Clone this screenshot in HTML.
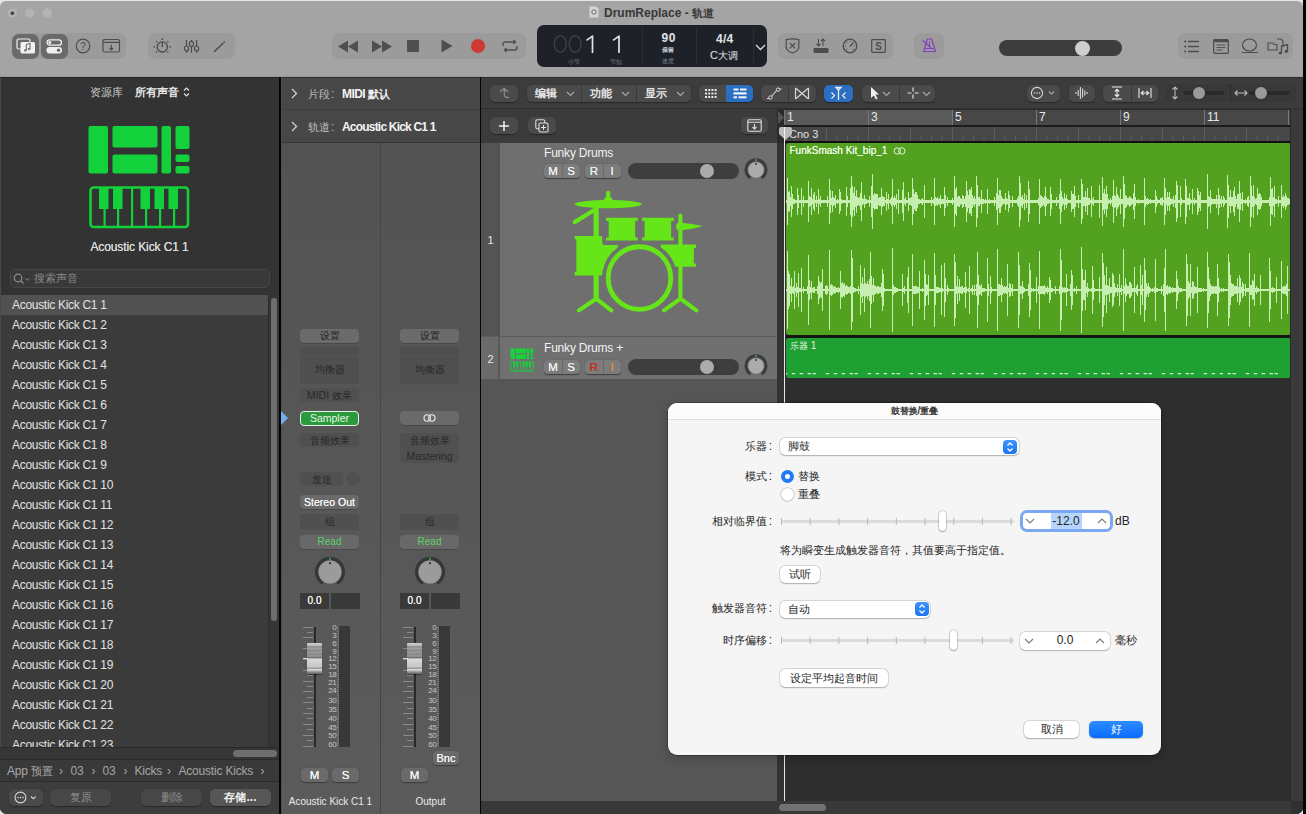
<!DOCTYPE html><html><head><meta charset="utf-8"><style>
*{margin:0;padding:0;box-sizing:border-box}
html,body{width:1306px;height:814px;overflow:hidden;background:#0a0a0a;font-family:"Liberation Sans",sans-serif}
.a{position:absolute}
.t{position:absolute;white-space:nowrap;line-height:1}
svg{position:absolute;overflow:visible}
.c{font-size:0.92em;letter-spacing:var(--cls,0em)}
</style></head><body><div class="a" style="left:0;top:0;width:1306px;height:814px;background:#e6e6e6"></div><div class="a" style="left:1303px;top:0;width:3px;height:814px;background:#060606"></div><div class="a" style="left:0;top:1px;width:1303px;height:813px;border-radius:6px 6px 7px 7px;overflow:hidden;background:#a4a4a4"><svg style="left:0;top:-1px" width="60" height="26" viewBox="0 0 60 26"><g fill="#b4b4b4" stroke="#a2a2a2" stroke-width="0.5"><circle cx="12.4" cy="13.1" r="4.9"/><circle cx="29.6" cy="13.1" r="4.9"/><circle cx="47.3" cy="13.1" r="4.9"/></g><circle cx="12.4" cy="13.2" r="1.9" fill="#4a4a4a"/></svg><svg style="left:589px;top:5px" width="10" height="12" viewBox="0 0 10 12"><path d="M0.5 0.5H7L9.5 3V11.5H0.5Z" fill="#d6d6d6" stroke="#bcbcbc" stroke-width="0.6"/><circle cx="5" cy="6" r="2.2" fill="none" stroke="#6a6a6a" stroke-width="1"/></svg><div class="t" style="left:604px;top:5.5px;font-size:12px;font-weight:bold;color:#383838">DrumReplace - <span class="c">轨道</span></div><div class="a" style="left:12px;top:32px;width:114px;height:26px;border-radius:7px;background:#9b9b9b"></div><div class="a" style="left:148px;top:32px;width:87px;height:26px;border-radius:7px;background:#9b9b9b"></div><div class="a" style="left:332px;top:32px;width:194px;height:26px;border-radius:7px;background:#9b9b9b"></div><div class="a" style="left:778px;top:32px;width:115px;height:26px;border-radius:7px;background:#9b9b9b"></div><div class="a" style="left:914px;top:32px;width:30px;height:26px;border-radius:7px;background:#9b9b9b"></div><div class="a" style="left:1178px;top:32px;width:115px;height:26px;border-radius:7px;background:#9b9b9b"></div><div class="a" style="left:12px;top:33px;width:27px;height:25px;border-radius:7px;background:#6a6a6a"></div><div class="a" style="left:41px;top:33px;width:27px;height:25px;border-radius:7px;background:#6a6a6a"></div><svg style="left:16px;top:37px" width="20" height="17" viewBox="0 0 20 17"><rect x="1" y="1" width="13" height="10" rx="1.5" fill="none" stroke="#f0f0f0" stroke-width="1.2"/><rect x="4.5" y="4" width="14.5" height="11.5" rx="1.5" fill="#f0f0f0"/><path d="M10.3 12.3V6.6L14 5.3V11" fill="none" stroke="#6a6a6a" stroke-width="1.1"/><ellipse cx="9.3" cy="12.4" rx="1.3" ry="1.1" fill="#6a6a6a"/><ellipse cx="13" cy="11.1" rx="1.3" ry="1.1" fill="#6a6a6a"/></svg><svg style="left:46px;top:38px" width="17" height="15" viewBox="0 0 17 15"><rect x="1" y="0.8" width="14.5" height="5.4" rx="2.7" fill="none" stroke="#f0f0f0" stroke-width="1.3"/><circle cx="3.8" cy="3.5" r="1.5" fill="#f0f0f0"/><rect x="0.5" y="8" width="15.5" height="6.5" rx="3.2" fill="#f0f0f0"/><circle cx="12.6" cy="11.2" r="1.7" fill="#6a6a6a"/></svg><svg style="left:75px;top:37px" width="16" height="16" viewBox="0 0 16 16"><circle cx="8" cy="8" r="6.8" fill="none" stroke="#4c4c4c" stroke-width="1.2"/><text x="8" y="11.6" text-anchor="middle" font-size="10" font-family="Liberation Sans" fill="#4c4c4c">?</text></svg><svg style="left:102px;top:37px" width="19" height="16" viewBox="0 0 19 16"><rect x="1" y="1.5" width="16.5" height="12.5" rx="1.5" fill="none" stroke="#4c4c4c" stroke-width="1.2"/><path d="M1 4.3H17.5" stroke="#4c4c4c" stroke-width="1.2"/><path d="M9.3 6.8v5 M7.3 9.8l2 2 2-2" fill="none" stroke="#4c4c4c" stroke-width="1.2"/></svg><svg style="left:153px;top:36px" width="18" height="18" viewBox="0 0 18 18"><circle cx="9.3" cy="9.9" r="5.1" fill="none" stroke="#4c4c4c" stroke-width="1.3"/><path d="M9.3 9.9V5" stroke="#4c4c4c" stroke-width="1.3"/><g fill="#4c4c4c"><circle cx="9.3" cy="2.2" r="0.85"/><circle cx="3.6" cy="4.5" r="0.8"/><circle cx="14.8" cy="4.5" r="0.8"/><circle cx="1.3" cy="9.9" r="0.8"/><circle cx="17" cy="9.9" r="0.8"/><circle cx="3.6" cy="15.1" r="0.8"/><circle cx="14.8" cy="15.1" r="0.8"/></g></svg><svg style="left:183px;top:38px" width="17" height="15" viewBox="0 0 17 15"><g stroke="#4c4c4c" stroke-width="1.2" fill="none"><path d="M3.5 1.1V13.7 M8.5 1.1V13.7 M13.6 1.1V13.7"/><rect x="1.5" y="7" width="4" height="5" rx="2" fill="#9b9b9b"/><rect x="6.5" y="2.4" width="4" height="5" rx="2" fill="#9b9b9b"/><rect x="11.6" y="7" width="4" height="5" rx="2" fill="#9b9b9b"/></g></svg><svg style="left:213px;top:39px" width="13" height="13" viewBox="0 0 13 13"><path d="M1.4 11.5L10 3.2" stroke="#4c4c4c" stroke-width="1.5" stroke-linecap="round"/><circle cx="11.2" cy="1.9" r="0.8" fill="#4c4c4c"/></svg><svg style="left:338px;top:39px" width="21" height="13" viewBox="0 0 21 13"><path d="M10 0.5L0 6.5 10 12.5Z M20 0.5L10 6.5 20 12.5Z" fill="#4f4f4f"/></svg><svg style="left:372px;top:39px" width="21" height="13" viewBox="0 0 21 13"><path d="M0 0.5L10 6.5 0 12.5Z M10 0.5L20 6.5 10 12.5Z" fill="#4f4f4f"/></svg><div class="a" style="left:407px;top:39px;width:12px;height:12px;border-radius:1px;background:#4f4f4f"></div><svg style="left:441px;top:38px" width="12" height="14" viewBox="0 0 12 14"><path d="M0.5 0.5L11.5 7 0.5 13.5Z" fill="#4f4f4f"/></svg><div class="a" style="left:471px;top:38px;width:14px;height:14px;border-radius:50%;background:#cc3a33"></div><svg style="left:501px;top:38px" width="18" height="14" viewBox="0 0 18 14"><g fill="none" stroke="#4f4f4f" stroke-width="1.4"><path d="M2 7V5.5Q2 3 4.5 3H14.5 M12.5 1l2 2-2 2 M16 7V8.5Q16 11 13.5 11H3.5 M5.5 9l-2 2 2 2"/></g></svg><div class="a" style="left:537px;top:24px;width:230px;height:42px;border-radius:7px;background:#1f2129"></div><div class="a" style="left:642px;top:26px;width:1px;height:38px;background:#2b2e37"></div><div class="a" style="left:696px;top:26px;width:1px;height:38px;background:#2b2e37"></div><div class="a" style="left:753px;top:26px;width:1px;height:38px;background:#2b2e37"></div><svg style="left:540px;top:29px" width="90" height="28" viewBox="0 0 90 28"><g fill="none" stroke-width="1.5"><ellipse cx="20.3" cy="14" rx="5.9" ry="8.3" stroke="#3b3e48"/><ellipse cx="35.2" cy="14" rx="5.9" ry="8.3" stroke="#3b3e48"/><path d="M46.5 10.4L52.5 6.1V22.9 M73 10.4L79 6.1V22.9" stroke="#dde5ee" stroke-width="1.7" stroke-linejoin="round"/></g></svg><div class="t" style="left:568px;top:57px;font-size:7px;color:#6f7d8c"><span class="c">小节</span></div><div class="t" style="left:610px;top:57px;font-size:7px;color:#6f7d8c"><span class="c">节拍</span></div><div class="t" style="left:661.5px;top:30.5px;font-size:12px;letter-spacing:0.6px;font-weight:bold;color:#e0e4ea">90</div><div class="t" style="left:662px;top:45px;font-size:7px;font-weight:bold;color:#d0d4da"><span class="c">保留</span></div><div class="t" style="left:662px;top:56px;font-size:7px;color:#7b8898"><span class="c">速度</span></div><div class="t" style="left:716px;top:31.5px;font-size:12px;letter-spacing:0.3px;font-weight:bold;color:#e0e4ea">4/4</div><div class="t" style="left:710px;top:48.5px;font-size:11px;color:#e0e4ea">C<span class="c">大调</span></div><svg style="left:755px;top:43px" width="11" height="7" viewBox="0 0 11 7"><path d="M1 1l4.5 4.5L10 1" fill="none" stroke="#d8d8d8" stroke-width="1.4"/></svg><svg style="left:785px;top:37px" width="15" height="16" viewBox="0 0 15 16"><path d="M1.2 1.5Q7.5 0.2 13.8 1.5V9Q13.8 13 7.5 15Q1.2 13 1.2 9Z" fill="none" stroke="#4c4c4c" stroke-width="1.2"/><path d="M4.8 5l5.4 5.4 M10.2 5l-5.4 5.4" stroke="#4c4c4c" stroke-width="1.1"/></svg><svg style="left:813px;top:37px" width="16" height="16" viewBox="0 0 16 16"><path d="M5.5 1v7 M3.5 6l2 2 2-2 M10 8V1 M8 3l2-2 2 2" fill="none" stroke="#4c4c4c" stroke-width="1.1"/><rect x="0.5" y="10" width="15" height="5" rx="1.2" fill="#4c4c4c"/></svg><svg style="left:842px;top:37px" width="16" height="16" viewBox="0 0 16 16"><circle cx="8" cy="8" r="6.8" fill="none" stroke="#4c4c4c" stroke-width="1.3"/><path d="M8 8.5l3.5-4" stroke="#4c4c4c" stroke-width="1.4"/><g fill="#4c4c4c"><circle cx="8" cy="3.3" r="0.6"/><circle cx="4.6" cy="4.6" r="0.6"/><circle cx="3.3" cy="8" r="0.6"/><circle cx="4.6" cy="11.4" r="0.6"/><circle cx="11.4" cy="11.4" r="0.6"/><circle cx="12.7" cy="8" r="0.6"/></g></svg><svg style="left:871px;top:38px" width="15" height="14" viewBox="0 0 15 14"><rect x="0.7" y="0.7" width="13.6" height="12.6" rx="0.8" fill="none" stroke="#4c4c4c" stroke-width="1.2"/><text x="7.5" y="10.6" text-anchor="middle" font-size="10" font-family="Liberation Sans" font-weight="bold" fill="#4c4c4c">S</text></svg><svg style="left:922px;top:37px" width="15" height="15" viewBox="0 0 15 15"><path d="M5.5 1H9.5L13.5 13.5H1.5Z" fill="none" stroke="#8a3fc0" stroke-width="1.2" stroke-linejoin="round"/><path d="M2.5 10.5H12.5" stroke="#8a3fc0" stroke-width="1.2"/><path d="M1 2.5L9 10" stroke="#8a3fc0" stroke-width="1.2"/><path d="M7.5 3.5V9" stroke="#8a3fc0" stroke-width="1"/></svg><div class="a" style="left:999px;top:39px;width:123px;height:16px;border-radius:8px;background:#3d3d3d"></div><div class="a" style="left:1075px;top:39.5px;width:15px;height:15px;border-radius:50%;background:#cfcfcf"></div><svg style="left:1184px;top:39px" width="16" height="13" viewBox="0 0 16 13"><g fill="#4c4c4c"><circle cx="1.2" cy="1.5" r="1"/><circle cx="1.2" cy="6.5" r="1"/><circle cx="1.2" cy="11.5" r="1"/></g><path d="M4 1.5H15 M4 6.5H15 M4 11.5H15" stroke="#4c4c4c" stroke-width="1.3"/></svg><svg style="left:1213px;top:38px" width="16" height="15" viewBox="0 0 16 15"><rect x="0.7" y="0.7" width="14.6" height="13.6" rx="1" fill="none" stroke="#4c4c4c" stroke-width="1.2"/><rect x="0.7" y="0.7" width="14.6" height="2.5" fill="#4c4c4c"/><path d="M3.5 6H12.5 M3.5 8.5H12.5 M3.5 11H9.5" stroke="#4c4c4c" stroke-width="0.9"/></svg><svg style="left:1241px;top:37px" width="18" height="16" viewBox="0 0 18 16"><ellipse cx="8.5" cy="7" rx="7" ry="6" fill="none" stroke="#4c4c4c" stroke-width="1.2"/><path d="M1 14.5H17" stroke="#4c4c4c" stroke-width="1.2"/></svg><svg style="left:1267px;top:36px" width="23" height="19" viewBox="0 0 23 19"><path d="M1 6H6l1 1.5H10V13H1Z" fill="none" stroke="#4c4c4c" stroke-width="1.1"/><path d="M10 2H14L16 4V10" fill="none" stroke="#4c4c4c" stroke-width="1.1"/><path d="M14.5 16V9l6-1.5V14" fill="none" stroke="#4c4c4c" stroke-width="1.3"/><circle cx="13.3" cy="16" r="1.6" fill="#4c4c4c"/><circle cx="19.3" cy="14.3" r="1.6" fill="#4c4c4c"/></svg><div class="a" style="left:0;top:75px;width:1303px;height:1px;background:#9a9a9a"></div><div class="a" style="left:0;top:76px;width:279px;height:740px;background:#333333"></div><div class="a" style="left:0;top:76px;width:1px;height:740px;background:#4a4a4a"></div><div class="a" style="left:0;top:76px;width:279px;height:1px;background:#262626"></div><div class="t" style="left:90px;top:85px;font-size:12px;color:#cfcfcf"><span class="c">资源库</span></div><div class="t" style="left:135px;top:85px;font-size:12px;font-weight:bold;color:#e8e8e8"><span class="c">所有声音</span></div><svg style="left:183px;top:85px" width="7" height="12" viewBox="0 0 7 12"><path d="M1 4.5L3.5 2 6 4.5 M1 7.5L3.5 10 6 7.5" fill="none" stroke="#e0e0e0" stroke-width="1.2"/></svg><svg style="left:88px;top:125px" width="102" height="103" viewBox="0 0 102 103"><g fill="#12d13a">
<rect x="0.5" y="0" width="19.5" height="47.5" rx="2"/>
<rect x="24.5" y="0" width="45" height="21.5" rx="2"/>
<rect x="24.5" y="28.5" width="45" height="19" rx="2"/>
<rect x="73.5" y="0" width="9.5" height="47.5" rx="2"/>
<rect x="87.5" y="0" width="14" height="23" rx="2"/>
<rect x="87.5" y="28.5" width="14" height="7.5" rx="2"/>
<rect x="87.5" y="40" width="14" height="7.5" rx="2"/>
</g>
<rect x="2.5" y="61.5" width="97.5" height="39.5" rx="3" fill="none" stroke="#12d13a" stroke-width="2.6"/>
<g fill="#12d13a">
<rect x="15.5" y="61" width="2.2" height="40"/><rect x="29" y="61" width="2.2" height="40"/><rect x="43" y="61" width="2.2" height="40"/>
<rect x="57" y="61" width="2.2" height="40"/><rect x="71" y="61" width="2.2" height="40"/><rect x="85" y="61" width="2.2" height="40"/>
<rect x="11" y="61" width="9.5" height="22"/><rect x="25" y="61" width="9.5" height="22"/>
<rect x="52.5" y="61" width="9.5" height="22"/><rect x="66.5" y="61" width="9.5" height="22"/><rect x="80.5" y="61" width="9.5" height="22"/>
</g></svg><div class="t" style="left:0;width:279px;text-align:center;top:240px;font-size:12px;letter-spacing:-0.1px;color:#dcdcdc;text-shadow:0 0 0.3px #dcdcdc">Acoustic Kick C1 1</div><div class="a" style="left:10px;top:268px;width:260px;height:19px;border-radius:5px;background:#393939;border:1px solid #474747"></div><svg style="left:13px;top:272px" width="18" height="12" viewBox="0 0 18 12"><circle cx="5" cy="5" r="3.8" fill="none" stroke="#8a8a8a" stroke-width="1.2"/><path d="M7.8 7.8L10.5 10.5" stroke="#8a8a8a" stroke-width="1.3"/><path d="M12.3 5.3l2 2 2-2" fill="none" stroke="#8a8a8a" stroke-width="1"/></svg><div class="t" style="left:34px;top:271px;font-size:12px;color:#8a8a8a"><span class="c">搜索声音</span></div><div class="a" style="left:1px;top:294px;width:267px;height:452px;background:#3b3b3b"></div><div class="a" style="left:1px;top:294px;width:267px;height:20px;background:#515151"></div><div class="t" style="left:12px;top:297.5px;font-size:12px;letter-spacing:-0.3px;color:#e2e2e2">Acoustic Kick C1 1</div><div class="t" style="left:12px;top:317.5px;font-size:12px;letter-spacing:-0.3px;color:#e2e2e2">Acoustic Kick C1 2</div><div class="t" style="left:12px;top:337.5px;font-size:12px;letter-spacing:-0.3px;color:#e2e2e2">Acoustic Kick C1 3</div><div class="t" style="left:12px;top:357.5px;font-size:12px;letter-spacing:-0.3px;color:#e2e2e2">Acoustic Kick C1 4</div><div class="t" style="left:12px;top:377.5px;font-size:12px;letter-spacing:-0.3px;color:#e2e2e2">Acoustic Kick C1 5</div><div class="t" style="left:12px;top:397.5px;font-size:12px;letter-spacing:-0.3px;color:#e2e2e2">Acoustic Kick C1 6</div><div class="t" style="left:12px;top:417.5px;font-size:12px;letter-spacing:-0.3px;color:#e2e2e2">Acoustic Kick C1 7</div><div class="t" style="left:12px;top:437.5px;font-size:12px;letter-spacing:-0.3px;color:#e2e2e2">Acoustic Kick C1 8</div><div class="t" style="left:12px;top:457.5px;font-size:12px;letter-spacing:-0.3px;color:#e2e2e2">Acoustic Kick C1 9</div><div class="t" style="left:12px;top:477.5px;font-size:12px;letter-spacing:-0.3px;color:#e2e2e2">Acoustic Kick C1 10</div><div class="t" style="left:12px;top:497.5px;font-size:12px;letter-spacing:-0.3px;color:#e2e2e2">Acoustic Kick C1 11</div><div class="t" style="left:12px;top:517.5px;font-size:12px;letter-spacing:-0.3px;color:#e2e2e2">Acoustic Kick C1 12</div><div class="t" style="left:12px;top:537.5px;font-size:12px;letter-spacing:-0.3px;color:#e2e2e2">Acoustic Kick C1 13</div><div class="t" style="left:12px;top:557.5px;font-size:12px;letter-spacing:-0.3px;color:#e2e2e2">Acoustic Kick C1 14</div><div class="t" style="left:12px;top:577.5px;font-size:12px;letter-spacing:-0.3px;color:#e2e2e2">Acoustic Kick C1 15</div><div class="t" style="left:12px;top:597.5px;font-size:12px;letter-spacing:-0.3px;color:#e2e2e2">Acoustic Kick C1 16</div><div class="t" style="left:12px;top:617.5px;font-size:12px;letter-spacing:-0.3px;color:#e2e2e2">Acoustic Kick C1 17</div><div class="t" style="left:12px;top:637.5px;font-size:12px;letter-spacing:-0.3px;color:#e2e2e2">Acoustic Kick C1 18</div><div class="t" style="left:12px;top:657.5px;font-size:12px;letter-spacing:-0.3px;color:#e2e2e2">Acoustic Kick C1 19</div><div class="t" style="left:12px;top:677.5px;font-size:12px;letter-spacing:-0.3px;color:#e2e2e2">Acoustic Kick C1 20</div><div class="t" style="left:12px;top:697.5px;font-size:12px;letter-spacing:-0.3px;color:#e2e2e2">Acoustic Kick C1 21</div><div class="t" style="left:12px;top:717.5px;font-size:12px;letter-spacing:-0.3px;color:#e2e2e2">Acoustic Kick C1 22</div><div class="t" style="left:12px;top:737.5px;font-size:12px;letter-spacing:-0.3px;color:#e2e2e2">Acoustic Kick C1 23</div><div class="a" style="left:0;top:746px;width:279px;height:67px;background:#333"></div><div class="a" style="left:268px;top:294px;width:11px;height:452px;background:#353535;border-left:1px solid #2c2c2c"></div><div class="a" style="left:271px;top:297px;width:6px;height:323px;border-radius:3px;background:#6e6e6e"></div><div class="a" style="left:0;top:746px;width:279px;height:12px;background:#363636;border-top:1px solid #2a2a2a"></div><div class="a" style="left:233px;top:749px;width:44px;height:7px;border-radius:3.5px;background:#6e6e6e"></div><div class="a" style="left:0;top:758px;width:279px;height:23px;background:#393939;border-top:1px solid #2a2a2a;border-bottom:1px solid #2a2a2a"></div><div class="t" style="left:7px;top:763.5px;font-size:12px;letter-spacing:-0.2px;color:#a6a6a6">App <span class="c">预置</span></div><div class="t" style="left:59px;top:763.5px;font-size:12px;letter-spacing:-0.2px;color:#a6a6a6">›</div><div class="t" style="left:70.5px;top:763.5px;font-size:12px;letter-spacing:-0.2px;color:#a6a6a6">03</div><div class="t" style="left:91.5px;top:763.5px;font-size:12px;letter-spacing:-0.2px;color:#a6a6a6">›</div><div class="t" style="left:102.5px;top:763.5px;font-size:12px;letter-spacing:-0.2px;color:#a6a6a6">03</div><div class="t" style="left:123.5px;top:763.5px;font-size:12px;letter-spacing:-0.2px;color:#a6a6a6">›</div><div class="t" style="left:134.5px;top:763.5px;font-size:12px;letter-spacing:-0.2px;color:#a6a6a6">Kicks</div><div class="t" style="left:167px;top:763.5px;font-size:12px;letter-spacing:-0.2px;color:#a6a6a6">›</div><div class="t" style="left:178.5px;top:763.5px;font-size:12px;letter-spacing:-0.2px;color:#a6a6a6">Acoustic Kicks</div><div class="t" style="left:260.5px;top:763.5px;font-size:12px;letter-spacing:-0.2px;color:#a6a6a6">›</div><div class="a" style="left:0;top:781px;width:279px;height:32px;background:#3d3d3d"></div><div class="a" style="left:9px;top:788px;width:34px;height:17px;border-radius:5px;background:#4a4a4a;box-shadow:0 0.5px 1px rgba(0,0,0,0.35)"></div><svg style="left:14px;top:790px" width="26" height="13" viewBox="0 0 26 13"><circle cx="6.5" cy="6.5" r="5.4" fill="none" stroke="#d8d8d8" stroke-width="1.1"/><g fill="#d8d8d8"><circle cx="4" cy="6.5" r="0.8"/><circle cx="6.5" cy="6.5" r="0.8"/><circle cx="9" cy="6.5" r="0.8"/></g><path d="M17 5.5l2.3 2.3 2.3-2.3" fill="none" stroke="#d8d8d8" stroke-width="1.1"/></svg><div class="a" style="left:50px;top:788px;width:61px;height:17px;border-radius:5px;background:#4a4a4a;box-shadow:0 0.5px 1px rgba(0,0,0,0.35);background:#474747"></div><div class="t" style="left:50px;width:61px;text-align:center;top:790px;font-size:12px;color:#8e8e8e"><span class="c">复原</span></div><div class="a" style="left:141px;top:788px;width:61px;height:17px;border-radius:5px;background:#4a4a4a;box-shadow:0 0.5px 1px rgba(0,0,0,0.35);background:#474747"></div><div class="t" style="left:141px;width:61px;text-align:center;top:790px;font-size:12px;color:#8e8e8e"><span class="c">删除</span></div><div class="a" style="left:210px;top:788px;width:61px;height:17px;border-radius:5px;background:#4a4a4a;box-shadow:0 0.5px 1px rgba(0,0,0,0.35);background:#575757"></div><div class="t" style="left:210px;width:61px;text-align:center;top:790px;font-size:12px;font-weight:bold;color:#f0f0f0"><span class="c">存储</span>...</div><div class="a" style="left:279px;top:76px;width:2px;height:740px;background:#040404"></div><div class="a" style="left:281px;top:76px;width:199px;height:737px;background:linear-gradient(#525252,#5b5b5b)"></div><div class="a" style="left:281px;top:76px;width:199px;height:66px;background:#474747"></div><div class="a" style="left:281px;top:76px;width:199px;height:1px;background:#2e2e2e"></div><div class="a" style="left:281px;top:108px;width:199px;height:1px;background:#3e3e3e"></div><div class="a" style="left:281px;top:141px;width:199px;height:1px;background:#363636"></div><div class="a" style="left:281px;top:76px;width:1px;height:737px;background:#4f4f4f"></div><svg style="left:291px;top:87px" width="7" height="11" viewBox="0 0 7 11"><path d="M1 1l4.5 4.5L1 10" fill="none" stroke="#d0d0d0" stroke-width="1.3"/></svg><svg style="left:291px;top:120px" width="7" height="11" viewBox="0 0 7 11"><path d="M1 1l4.5 4.5L1 10" fill="none" stroke="#d0d0d0" stroke-width="1.3"/></svg><div class="t" style="left:308px;top:86.5px;font-size:12px;color:#bdbdbd"><span class="c">片段</span><span style="margin-left:1px">:</span></div><div class="t" style="left:342px;top:86.5px;font-size:12px;color:#f2f2f2;font-weight:bold;letter-spacing:-0.6px">MIDI <span class="c">默认</span></div><div class="t" style="left:308px;top:119.5px;font-size:12px;color:#bdbdbd"><span class="c">轨道</span><span style="margin-left:1px">:</span></div><div class="t" style="left:342px;top:119.5px;font-size:12px;color:#f2f2f2;font-weight:bold;letter-spacing:-0.8px">Acoustic Kick C1 1</div><div class="a" style="left:380px;top:142px;width:1px;height:671px;background:#464646"></div><div class="a" style="left:300px;top:328px;width:59px;height:14px;border-radius:4px;background:#6b6b6b;box-shadow:0 0.5px 0.5px rgba(0,0,0,0.3)"></div><div class="t" style="left:300px;width:59px;text-align:center;top:329.25px;font-size:10.5px;color:#1e1e1e"><span class="c">设置</span></div><div class="a" style="left:300px;top:346px;width:59px;height:8px;border-radius:0px;background:#4f4f4f;"></div><div class="a" style="left:300px;top:355px;width:59px;height:28px;border-radius:0px;background:#4f4f4f;"></div><div class="t" style="left:300px;width:59px;text-align:center;top:363.25px;font-size:10.5px;color:#262626"><span class="c">均衡器</span></div><div class="a" style="left:300px;top:432px;width:59px;height:14px;border-radius:4px;background:#505050;"></div><div class="a" style="left:300px;top:513px;width:59px;height:16px;border-radius:0px;background:#505050;"></div><div class="t" style="left:300px;width:59px;text-align:center;top:515.25px;font-size:10.5px;color:#282828"><span class="c">组</span></div><div class="a" style="left:300px;top:534px;width:59px;height:14px;border-radius:4px;background:#686868;box-shadow:0 0.5px 0.5px rgba(0,0,0,0.3)"></div><div class="t" style="left:300px;width:59px;text-align:center;top:535.5px;font-size:10px;color:#5fd068">Read</div><svg style="left:314px;top:554.5px" width="32" height="32" viewBox="0 0 32 32"><path d="M9 27.5A13.5 13.5 0 1 1 23 27.5" fill="none" stroke="#363636" stroke-width="3.2"/><circle cx="16" cy="16" r="11.5" fill="#9b9b9b"/><circle cx="16" cy="7.2" r="1.1" fill="#333"/><path d="M16 1.2V4" stroke="#3fbf50" stroke-width="1.2"/></svg><div class="a" style="left:300px;top:592px;width:29px;height:16px;background:#393939"></div><div class="a" style="left:331px;top:592px;width:29px;height:16px;background:#393939"></div><div class="t" style="left:301px;width:27px;text-align:center;top:595px;font-size:10px;color:#f4f4f4;text-shadow:0 0 0.4px #fff">0.0</div><svg style="left:303px;top:626px" width="12" height="121" viewBox="0 0 12 121"><g fill="#8a8a8a"><rect x="0" y="0" width="10" height="1"/><rect x="4" y="5" width="6" height="1"/><rect x="0" y="10" width="10" height="1"/><rect x="4" y="16" width="6" height="1"/><rect x="0" y="21" width="10" height="1"/><rect x="4" y="26" width="6" height="1"/><rect x="0" y="32" width="10" height="1"/><rect x="4" y="37" width="6" height="1"/><rect x="0" y="43" width="10" height="1"/><rect x="4" y="48" width="6" height="1"/><rect x="0" y="54" width="10" height="1"/><rect x="4" y="59" width="6" height="1"/><rect x="0" y="64" width="10" height="1"/><rect x="4" y="70" width="6" height="1"/><rect x="0" y="75" width="10" height="1"/><rect x="4" y="81" width="6" height="1"/><rect x="0" y="86" width="10" height="1"/><rect x="4" y="91" width="6" height="1"/><rect x="0" y="97" width="10" height="1"/><rect x="4" y="102" width="6" height="1"/><rect x="0" y="108" width="10" height="1"/><rect x="4" y="113" width="6" height="1"/><rect x="0" y="119" width="10" height="1"/></g></svg><div class="a" style="left:314px;top:626px;width:2px;height:120px;background:#2a2a2a"></div><div class="a" style="left:307px;top:642px;width:15px;height:31px;border-radius:1px;background:linear-gradient(#d0d0d0 0%,#b8b8b8 8%,#8c8c8c 12%,#a0a0a0 18%,#8a8a8a 24%,#9a9a9a 30%,#888 36%,#999 42%,#707070 47%,#dcdcdc 52%,#d0d0d0 62%,#c8c8c8 76%,#9a9a9a 82%,#e0e0e0 86%,#8a8a8a 94%,#666 100%);box-shadow:0 1px 1px rgba(0,0,0,0.4)"></div><div class="a" style="left:303px;top:657px;width:5px;height:1px;background:#ddd"></div><div class="t" style="left:317px;width:19.5px;text-align:right;top:623.0px;font-size:8px;letter-spacing:-0.3px;color:#c4c4c4">0</div><div class="t" style="left:317px;width:19.5px;text-align:right;top:631.1px;font-size:8px;letter-spacing:-0.3px;color:#c4c4c4">3</div><div class="t" style="left:317px;width:19.5px;text-align:right;top:638.7px;font-size:8px;letter-spacing:-0.3px;color:#c4c4c4">6</div><div class="t" style="left:317px;width:19.5px;text-align:right;top:646.7px;font-size:8px;letter-spacing:-0.3px;color:#c4c4c4">9</div><div class="t" style="left:317px;width:19.5px;text-align:right;top:654.4000000000001px;font-size:8px;letter-spacing:-0.3px;color:#c4c4c4">12</div><div class="t" style="left:317px;width:19.5px;text-align:right;top:662.2px;font-size:8px;letter-spacing:-0.3px;color:#c4c4c4">15</div><div class="t" style="left:317px;width:19.5px;text-align:right;top:670.2px;font-size:8px;letter-spacing:-0.3px;color:#c4c4c4">18</div><div class="t" style="left:317px;width:19.5px;text-align:right;top:677.9000000000001px;font-size:8px;letter-spacing:-0.3px;color:#c4c4c4">21</div><div class="t" style="left:317px;width:19.5px;text-align:right;top:686.0px;font-size:8px;letter-spacing:-0.3px;color:#c4c4c4">24</div><div class="t" style="left:317px;width:19.5px;text-align:right;top:696.2px;font-size:8px;letter-spacing:-0.3px;color:#c4c4c4">30</div><div class="t" style="left:317px;width:19.5px;text-align:right;top:705.0px;font-size:8px;letter-spacing:-0.3px;color:#c4c4c4">35</div><div class="t" style="left:317px;width:19.5px;text-align:right;top:713.6px;font-size:8px;letter-spacing:-0.3px;color:#c4c4c4">40</div><div class="t" style="left:317px;width:19.5px;text-align:right;top:722.5px;font-size:8px;letter-spacing:-0.3px;color:#c4c4c4">45</div><div class="t" style="left:317px;width:19.5px;text-align:right;top:731.1px;font-size:8px;letter-spacing:-0.3px;color:#c4c4c4">50</div><div class="t" style="left:317px;width:19.5px;text-align:right;top:739.8000000000001px;font-size:8px;letter-spacing:-0.3px;color:#c4c4c4">60</div><svg style="left:337px;top:626px" width="2" height="120" viewBox="0 0 2 120"><path d="M1 0V120" stroke="#9a9a9a" stroke-width="1" stroke-dasharray="1 1"/></svg><div class="a" style="left:339px;top:625px;width:11px;height:121px;background:#383838"></div><div class="a" style="left:301px;top:767px;width:27px;height:14px;border-radius:4px;background:#6a6a6a;box-shadow:0 0.5px 1px rgba(0,0,0,0.35)"></div><div class="t" style="left:301px;width:27px;text-align:center;top:769px;font-size:11.5px;color:#f4f4f4;text-shadow:0 0 0.4px #fff">M</div><div class="a" style="left:400px;top:328px;width:59px;height:14px;border-radius:4px;background:#6b6b6b;box-shadow:0 0.5px 0.5px rgba(0,0,0,0.3)"></div><div class="t" style="left:400px;width:59px;text-align:center;top:329.25px;font-size:10.5px;color:#1e1e1e"><span class="c">设置</span></div><div class="a" style="left:400px;top:346px;width:59px;height:8px;border-radius:0px;background:#4f4f4f;"></div><div class="a" style="left:400px;top:355px;width:59px;height:28px;border-radius:0px;background:#4f4f4f;"></div><div class="t" style="left:400px;width:59px;text-align:center;top:363.25px;font-size:10.5px;color:#262626"><span class="c">均衡器</span></div><div class="a" style="left:400px;top:432px;width:59px;height:30px;border-radius:4px;background:#505050;"></div><div class="a" style="left:400px;top:513px;width:59px;height:16px;border-radius:0px;background:#505050;"></div><div class="t" style="left:400px;width:59px;text-align:center;top:515.25px;font-size:10.5px;color:#282828"><span class="c">组</span></div><div class="a" style="left:400px;top:534px;width:59px;height:14px;border-radius:4px;background:#686868;box-shadow:0 0.5px 0.5px rgba(0,0,0,0.3)"></div><div class="t" style="left:400px;width:59px;text-align:center;top:535.5px;font-size:10px;color:#5fd068">Read</div><svg style="left:414px;top:554.5px" width="32" height="32" viewBox="0 0 32 32"><path d="M9 27.5A13.5 13.5 0 1 1 23 27.5" fill="none" stroke="#363636" stroke-width="3.2"/><circle cx="16" cy="16" r="11.5" fill="#9b9b9b"/><circle cx="16" cy="7.2" r="1.1" fill="#333"/><path d="M16 1.2V4" stroke="#3fbf50" stroke-width="1.2"/></svg><div class="a" style="left:400px;top:592px;width:29px;height:16px;background:#393939"></div><div class="a" style="left:431px;top:592px;width:29px;height:16px;background:#393939"></div><div class="t" style="left:401px;width:27px;text-align:center;top:595px;font-size:10px;color:#f4f4f4;text-shadow:0 0 0.4px #fff">0.0</div><svg style="left:403px;top:626px" width="12" height="121" viewBox="0 0 12 121"><g fill="#8a8a8a"><rect x="0" y="0" width="10" height="1"/><rect x="4" y="5" width="6" height="1"/><rect x="0" y="10" width="10" height="1"/><rect x="4" y="16" width="6" height="1"/><rect x="0" y="21" width="10" height="1"/><rect x="4" y="26" width="6" height="1"/><rect x="0" y="32" width="10" height="1"/><rect x="4" y="37" width="6" height="1"/><rect x="0" y="43" width="10" height="1"/><rect x="4" y="48" width="6" height="1"/><rect x="0" y="54" width="10" height="1"/><rect x="4" y="59" width="6" height="1"/><rect x="0" y="64" width="10" height="1"/><rect x="4" y="70" width="6" height="1"/><rect x="0" y="75" width="10" height="1"/><rect x="4" y="81" width="6" height="1"/><rect x="0" y="86" width="10" height="1"/><rect x="4" y="91" width="6" height="1"/><rect x="0" y="97" width="10" height="1"/><rect x="4" y="102" width="6" height="1"/><rect x="0" y="108" width="10" height="1"/><rect x="4" y="113" width="6" height="1"/><rect x="0" y="119" width="10" height="1"/></g></svg><div class="a" style="left:414px;top:626px;width:2px;height:120px;background:#2a2a2a"></div><div class="a" style="left:407px;top:642px;width:15px;height:31px;border-radius:1px;background:linear-gradient(#d0d0d0 0%,#b8b8b8 8%,#8c8c8c 12%,#a0a0a0 18%,#8a8a8a 24%,#9a9a9a 30%,#888 36%,#999 42%,#707070 47%,#dcdcdc 52%,#d0d0d0 62%,#c8c8c8 76%,#9a9a9a 82%,#e0e0e0 86%,#8a8a8a 94%,#666 100%);box-shadow:0 1px 1px rgba(0,0,0,0.4)"></div><div class="a" style="left:403px;top:657px;width:5px;height:1px;background:#ddd"></div><div class="t" style="left:417px;width:19.5px;text-align:right;top:623.0px;font-size:8px;letter-spacing:-0.3px;color:#c4c4c4">0</div><div class="t" style="left:417px;width:19.5px;text-align:right;top:631.1px;font-size:8px;letter-spacing:-0.3px;color:#c4c4c4">3</div><div class="t" style="left:417px;width:19.5px;text-align:right;top:638.7px;font-size:8px;letter-spacing:-0.3px;color:#c4c4c4">6</div><div class="t" style="left:417px;width:19.5px;text-align:right;top:646.7px;font-size:8px;letter-spacing:-0.3px;color:#c4c4c4">9</div><div class="t" style="left:417px;width:19.5px;text-align:right;top:654.4000000000001px;font-size:8px;letter-spacing:-0.3px;color:#c4c4c4">12</div><div class="t" style="left:417px;width:19.5px;text-align:right;top:662.2px;font-size:8px;letter-spacing:-0.3px;color:#c4c4c4">15</div><div class="t" style="left:417px;width:19.5px;text-align:right;top:670.2px;font-size:8px;letter-spacing:-0.3px;color:#c4c4c4">18</div><div class="t" style="left:417px;width:19.5px;text-align:right;top:677.9000000000001px;font-size:8px;letter-spacing:-0.3px;color:#c4c4c4">21</div><div class="t" style="left:417px;width:19.5px;text-align:right;top:686.0px;font-size:8px;letter-spacing:-0.3px;color:#c4c4c4">24</div><div class="t" style="left:417px;width:19.5px;text-align:right;top:696.2px;font-size:8px;letter-spacing:-0.3px;color:#c4c4c4">30</div><div class="t" style="left:417px;width:19.5px;text-align:right;top:705.0px;font-size:8px;letter-spacing:-0.3px;color:#c4c4c4">35</div><div class="t" style="left:417px;width:19.5px;text-align:right;top:713.6px;font-size:8px;letter-spacing:-0.3px;color:#c4c4c4">40</div><div class="t" style="left:417px;width:19.5px;text-align:right;top:722.5px;font-size:8px;letter-spacing:-0.3px;color:#c4c4c4">45</div><div class="t" style="left:417px;width:19.5px;text-align:right;top:731.1px;font-size:8px;letter-spacing:-0.3px;color:#c4c4c4">50</div><div class="t" style="left:417px;width:19.5px;text-align:right;top:739.8000000000001px;font-size:8px;letter-spacing:-0.3px;color:#c4c4c4">60</div><svg style="left:437px;top:626px" width="2" height="120" viewBox="0 0 2 120"><path d="M1 0V120" stroke="#9a9a9a" stroke-width="1" stroke-dasharray="1 1"/></svg><div class="a" style="left:439px;top:625px;width:11px;height:121px;background:#383838"></div><div class="a" style="left:401px;top:767px;width:27px;height:14px;border-radius:4px;background:#6a6a6a;box-shadow:0 0.5px 1px rgba(0,0,0,0.35)"></div><div class="t" style="left:401px;width:27px;text-align:center;top:769px;font-size:11.5px;color:#f4f4f4;text-shadow:0 0 0.4px #fff">M</div><div class="t" style="left:300px;width:59px;text-align:center;top:388px;font-size:10px;color:#2f2f2f"></div><div class="a" style="left:300px;top:387px;width:59px;height:14px;border-radius:4px;background:#505050"></div><div class="t" style="left:300px;width:59px;text-align:center;top:388.5px;font-size:10.5px;color:#282828">MIDI <span class="c">效果</span></div><div class="a" style="left:300px;top:410px;width:59px;height:15px;border-radius:4px;background:#2a9a3c;border:1px solid #e8f0e8"></div><div class="t" style="left:300px;width:59px;text-align:center;top:412px;font-size:10.5px;color:#e6f5e6">Sampler</div><svg style="left:281px;top:410px" width="7" height="14" viewBox="0 0 7 14"><path d="M0 0L7 7 0 14Z" fill="#6fb0f0"/></svg><div class="t" style="left:300px;width:59px;text-align:center;top:433.5px;font-size:10.5px;color:#282828"><span class="c">音频效果</span></div><div class="a" style="left:300px;top:471px;width:43px;height:14px;border-radius:4px;background:#505050"></div><div class="t" style="left:300px;width:43px;text-align:center;top:472.5px;font-size:10.5px;color:#282828"><span class="c">发送</span></div><div class="a" style="left:346px;top:471px;width:14px;height:14px;border-radius:50%;background:#505050"></div><div class="a" style="left:300px;top:494px;width:59px;height:14px;border-radius:4px;background:#6a6a6a;box-shadow:0 0.5px 0.5px rgba(0,0,0,0.3)"></div><div class="t" style="left:300px;width:59px;text-align:center;top:496px;font-size:10.5px;color:#f4f4f4;text-shadow:0 0 0.3px #fff">Stereo Out</div><div class="a" style="left:332px;top:767px;width:27px;height:14px;border-radius:4px;background:#6a6a6a;box-shadow:0 0.5px 1px rgba(0,0,0,0.35)"></div><div class="t" style="left:332px;width:27px;text-align:center;top:769px;font-size:11.5px;color:#f4f4f4;text-shadow:0 0 0.4px #fff">S</div><div class="t" style="left:281px;width:99px;text-align:center;top:796px;font-size:10px;color:#eaeaea">Acoustic Kick C1 1</div><div class="a" style="left:400px;top:410px;width:59px;height:14px;border-radius:4px;background:#6a6a6a;box-shadow:0 0.5px 0.5px rgba(0,0,0,0.3)"></div><svg style="left:423px;top:413px" width="13" height="8" viewBox="0 0 13 8"><circle cx="4.2" cy="4" r="3.2" fill="none" stroke="#f0f0f0" stroke-width="1.1"/><circle cx="8.8" cy="4" r="3.2" fill="none" stroke="#f0f0f0" stroke-width="1.1"/></svg><div class="t" style="left:400px;width:59px;text-align:center;top:433.5px;font-size:10.5px;color:#282828"><span class="c">音频效果</span></div><div class="t" style="left:400px;width:59px;text-align:center;top:449.5px;font-size:10.5px;color:#282828">Mastering</div><div class="a" style="left:433px;top:750px;width:26px;height:14px;border-radius:4px;background:#6a6a6a;box-shadow:0 0.5px 1px rgba(0,0,0,0.35)"></div><div class="t" style="left:433px;width:26px;text-align:center;top:752px;font-size:11px;color:#f4f4f4;text-shadow:0 0 0.4px #fff">Bnc</div><div class="t" style="left:381px;width:99px;text-align:center;top:796px;font-size:10px;color:#eaeaea">Output</div><div class="a" style="left:480px;top:76px;width:1px;height:737px;background:#050505"></div><div class="a" style="left:481px;top:76px;width:822px;height:737px;background:#2e2e2e"></div><div class="a" style="left:481px;top:76px;width:822px;height:32px;background:#3c3c3c;border-top:1px solid #2f2f2f"></div><div class="a" style="left:481px;top:107px;width:822px;height:1px;background:#313131"></div><div class="a" style="left:481px;top:108px;width:296px;height:34px;background:#3b3b3b"></div><div class="a" style="left:490px;top:83.5px;width:28px;height:17.0px;border-radius:5px;background:#4a4a4a;box-shadow:0 0.5px 1px rgba(0,0,0,0.35)"></div><svg style="left:497px;top:85.5px" width="14" height="13" viewBox="0 0 14 13"><path d="M3.4 4.6L7.1 1.4 10.7 4.6 M7.3 1.6V8Q7.3 10.5 11.5 10.5" fill="none" stroke="#8c8c8c" stroke-width="1.3" stroke-linecap="round" stroke-linejoin="round"/></svg><div class="a" style="left:527px;top:83.5px;width:164px;height:17.0px;border-radius:5px;background:#4a4a4a;box-shadow:0 0.5px 1px rgba(0,0,0,0.35)"></div><div class="a" style="left:581px;top:83.5px;width:1px;height:17.0px;background:#3a3a3a"></div><div class="a" style="left:636px;top:83.5px;width:1px;height:17.0px;background:#3a3a3a"></div><div class="t" style="left:535px;top:85.5px;font-size:12px;font-weight:bold;color:#e6e6e6"><span class="c">编辑</span></div><svg style="left:566px;top:89.5px" width="9" height="6" viewBox="0 0 9 6"><path d="M1 1l3.5 3.5L8 1" fill="none" stroke="#a8a8a8" stroke-width="1.1"/></svg><div class="t" style="left:590px;top:85.5px;font-size:12px;font-weight:bold;color:#e6e6e6"><span class="c">功能</span></div><svg style="left:621px;top:89.5px" width="9" height="6" viewBox="0 0 9 6"><path d="M1 1l3.5 3.5L8 1" fill="none" stroke="#a8a8a8" stroke-width="1.1"/></svg><div class="t" style="left:645px;top:85.5px;font-size:12px;font-weight:bold;color:#e6e6e6"><span class="c">显示</span></div><svg style="left:676px;top:89.5px" width="9" height="6" viewBox="0 0 9 6"><path d="M1 1l3.5 3.5L8 1" fill="none" stroke="#a8a8a8" stroke-width="1.1"/></svg><div class="a" style="left:699px;top:83.5px;width:54px;height:17.0px;border-radius:5px;background:#4a4a4a;box-shadow:0 0.5px 1px rgba(0,0,0,0.35)"></div><div class="a" style="left:726px;top:83.5px;width:27px;height:17px;border-radius:0 5px 5px 0;background:#2a6fc2"></div><svg style="left:704px;top:86.5px" width="15" height="12" viewBox="0 0 15 12"><g fill="#e6e6e6"><rect x="1.0" y="1.0" width="2" height="2"/><rect x="1.0" y="4.5" width="2" height="2"/><rect x="1.0" y="8.0" width="2" height="2"/><rect x="4.2" y="1.0" width="2" height="2"/><rect x="4.2" y="4.5" width="2" height="2"/><rect x="4.2" y="8.0" width="2" height="2"/><rect x="7.4" y="1.0" width="2" height="2"/><rect x="7.4" y="4.5" width="2" height="2"/><rect x="7.4" y="8.0" width="2" height="2"/><rect x="10.6" y="1.0" width="2" height="2"/><rect x="10.6" y="4.5" width="2" height="2"/><rect x="10.6" y="8.0" width="2" height="2"/></g></svg><svg style="left:733px;top:86.5px" width="14" height="11" viewBox="0 0 14 11"><g fill="#f4f4f4"><rect x="0.5" y="0.5" width="5" height="2"/><rect x="7" y="0.5" width="6.5" height="2"/><rect x="0.5" y="4.3" width="13" height="2.2"/><rect x="0.5" y="8.3" width="3.5" height="2"/><rect x="5.5" y="8.3" width="8" height="2"/></g></svg><div class="a" style="left:761px;top:83.5px;width:55px;height:17.0px;border-radius:5px;background:#4a4a4a;box-shadow:0 0.5px 1px rgba(0,0,0,0.35)"></div><div class="a" style="left:788px;top:83.5px;width:1px;height:17.0px;background:#3a3a3a"></div><svg style="left:766px;top:85.5px" width="17" height="13" viewBox="0 0 17 13"><path d="M1 11.5H3.5L12 2H15.5" fill="none" stroke="#d8d8d8" stroke-width="1.1"/><circle cx="4.5" cy="10.5" r="1.7" fill="#4a4a4a" stroke="#d8d8d8" stroke-width="1"/><circle cx="12" cy="2.6" r="1.7" fill="#4a4a4a" stroke="#d8d8d8" stroke-width="1"/></svg><svg style="left:794px;top:85.5px" width="16" height="13" viewBox="0 0 16 13"><path d="M1.5 1V12 M14.5 1V12 M1.5 1Q8 6.5 14.5 12 M1.5 12Q8 6.5 14.5 1" fill="none" stroke="#d8d8d8" stroke-width="1.2"/></svg><div class="a" style="left:824px;top:83.5px;width:29px;height:17.0px;border-radius:5px;background:#2a6fc2;box-shadow:0 0.5px 1px rgba(0,0,0,0.35)"></div><svg style="left:830px;top:84.5px" width="17" height="15" viewBox="0 0 17 15"><path d="M8.5 3V14 M6 1.5H11L8.5 4Z" fill="none" stroke="#f0f0f0" stroke-width="1.3"/><path d="M1.5 6.5l3 3-3 3 M15.5 6.5l-3 3 3 3" fill="none" stroke="#f0f0f0" stroke-width="1.1"/></svg><div class="a" style="left:862px;top:83.5px;width:73px;height:17.0px;border-radius:5px;background:#4a4a4a;box-shadow:0 0.5px 1px rgba(0,0,0,0.35)"></div><div class="a" style="left:899px;top:83.5px;width:1px;height:17.0px;background:#3a3a3a"></div><svg style="left:870px;top:84.5px" width="10" height="14" viewBox="0 0 10 14"><path d="M1 1V12L3.8 9.4 6 13.5 7.6 12.7 5.5 8.6H9Z" fill="#f0f0f0"/></svg><svg style="left:882px;top:89.5px" width="9" height="6" viewBox="0 0 9 6"><path d="M1 1l3.5 3.5L8 1" fill="none" stroke="#a8a8a8" stroke-width="1.1"/></svg><svg style="left:907px;top:85.5px" width="12" height="12" viewBox="0 0 12 12"><path d="M6 0.5V4.5 M6 7.5V11.5 M0.5 6H4.5 M7.5 6H11.5" stroke="#e0e0e0" stroke-width="1.2"/></svg><svg style="left:922px;top:89.5px" width="9" height="6" viewBox="0 0 9 6"><path d="M1 1l3.5 3.5L8 1" fill="none" stroke="#a8a8a8" stroke-width="1.1"/></svg><div class="a" style="left:1027px;top:83.5px;width:33px;height:17.0px;border-radius:5px;background:#4a4a4a;box-shadow:0 0.5px 1px rgba(0,0,0,0.35)"></div><svg style="left:1030px;top:84.5px" width="28" height="14" viewBox="0 0 28 14"><circle cx="7" cy="7" r="5.6" fill="none" stroke="#d8d8d8" stroke-width="1.1"/><g fill="#d8d8d8"><circle cx="4.5" cy="7" r="0.8"/><circle cx="7" cy="7" r="0.8"/><circle cx="9.5" cy="7" r="0.8"/></g><path d="M19 5.5l2.5 2.5 2.5-2.5" fill="none" stroke="#a8a8a8" stroke-width="1.1"/></svg><div class="a" style="left:1069px;top:83.5px;width:26px;height:17.0px;border-radius:5px;background:#4a4a4a;box-shadow:0 0.5px 1px rgba(0,0,0,0.35)"></div><svg style="left:1075px;top:84.5px" width="14" height="14" viewBox="0 0 14 14"><path d="M1 6V8 M3.2 4V10 M5.4 1V13 M7.6 2.5V11.5 M9.8 4.5V9.5 M12 6V8" stroke="#d8d8d8" stroke-width="1.1"/></svg><div class="a" style="left:1103px;top:83.5px;width:55px;height:17.0px;border-radius:5px;background:#4a4a4a;box-shadow:0 0.5px 1px rgba(0,0,0,0.35)"></div><div class="a" style="left:1131px;top:83.5px;width:1px;height:17.0px;background:#3a3a3a"></div><svg style="left:1111px;top:84.5px" width="12" height="14" viewBox="0 0 12 14"><path d="M1 1H11 M1 13H11 M6 3.5V10.5 M3.8 5.5L6 3.3 8.2 5.5 M3.8 8.5L6 10.7 8.2 8.5" fill="none" stroke="#e8e8e8" stroke-width="1.2"/></svg><svg style="left:1138px;top:85.5px" width="14" height="12" viewBox="0 0 14 12"><path d="M1 1V11 M13 1V11 M3.5 6H10.5 M5.5 4L3.3 6 5.5 8 M8.5 4L10.7 6 8.5 8" fill="none" stroke="#e8e8e8" stroke-width="1.1"/></svg><div class="a" style="left:1165px;top:82.5px;width:131px;height:18px;border-radius:5px;background:#383838"></div><div class="a" style="left:1230px;top:82.5px;width:1px;height:18px;background:#2c2c2c"></div><svg style="left:1171px;top:84.5px" width="8" height="14" viewBox="0 0 8 14"><path d="M4 1V13 M1.5 3.5L4 1 6.5 3.5 M1.5 10.5L4 13 6.5 10.5" fill="none" stroke="#b8b8b8" stroke-width="1.1"/></svg><div class="a" style="left:1184px;top:89.5px;width:40px;height:4px;border-radius:2px;background:#2a2a2a"></div><div class="a" style="left:1193px;top:85.5px;width:12px;height:12px;border-radius:50%;background:#9a9a9a"></div><svg style="left:1234px;top:87.5px" width="14" height="8" viewBox="0 0 14 8"><path d="M1 4H13 M3.5 1.5L1 4 3.5 6.5 M10.5 1.5L13 4 10.5 6.5" fill="none" stroke="#b8b8b8" stroke-width="1.1"/></svg><div class="a" style="left:1249px;top:89.5px;width:41px;height:4px;border-radius:2px;background:#2a2a2a"></div><div class="a" style="left:1255px;top:85.5px;width:12px;height:12px;border-radius:50%;background:#9a9a9a"></div><div class="a" style="left:490px;top:116px;width:28px;height:17px;border-radius:5px;background:#4a4a4a;box-shadow:0 0.5px 1px rgba(0,0,0,0.35)"></div><svg style="left:498px;top:119px" width="12" height="12" viewBox="0 0 12 12"><path d="M6 1V11 M1 6H11" stroke="#f0f0f0" stroke-width="1.5"/></svg><div class="a" style="left:528px;top:116px;width:28px;height:17px;border-radius:5px;background:#4a4a4a;box-shadow:0 0.5px 1px rgba(0,0,0,0.35)"></div><svg style="left:535px;top:118px" width="14" height="14" viewBox="0 0 14 14"><rect x="0.8" y="0.8" width="9" height="9" rx="1.5" fill="none" stroke="#e0e0e0" stroke-width="1.1"/><rect x="4" y="4" width="9" height="9" rx="1.5" fill="#4a4a4a" stroke="#e0e0e0" stroke-width="1.1"/><path d="M8.5 6V11 M6 8.5H11" stroke="#e0e0e0" stroke-width="1.1"/></svg><div class="a" style="left:741px;top:116px;width:27px;height:17px;border-radius:5px;background:#4a4a4a;box-shadow:0 0.5px 1px rgba(0,0,0,0.35)"></div><svg style="left:747px;top:118px" width="15" height="13" viewBox="0 0 15 13"><rect x="0.8" y="0.8" width="13.4" height="11.4" rx="1.2" fill="none" stroke="#e0e0e0" stroke-width="1.1"/><path d="M0.8 3.3H14.2 M7.5 5V10 M5.5 8l2 2 2-2" fill="none" stroke="#e0e0e0" stroke-width="1.1"/></svg><div class="a" style="left:481px;top:142px;width:296px;height:658px;background:#565656"></div><div class="a" style="left:481px;top:142px;width:18px;height:194px;background:#545454;border-right:1px solid #4e4e4e"></div><div class="a" style="left:500px;top:142px;width:277px;height:194px;background:#6f6f6f"></div><div class="t" style="left:481.5px;width:18px;text-align:center;top:233.5px;font-size:11px;color:#e6e6e6">1</div><div class="a" style="left:481px;top:335px;width:296px;height:1px;background:#5c5c5c"></div><div class="a" style="left:481px;top:336px;width:18px;height:42px;background:#6a6a6a;border-right:1px solid #5a5a5a"></div><div class="a" style="left:500px;top:336px;width:277px;height:42px;background:#707070"></div><div class="a" style="left:481px;top:378px;width:296px;height:1px;background:#555"></div><div class="t" style="left:481.5px;width:18px;text-align:center;top:352.7px;font-size:11px;color:#e6e6e6">2</div><div class="t" style="left:544px;top:146px;font-size:12px;letter-spacing:-0.2px;color:#f2f2f2">Funky Drums</div><div class="a" style="left:544px;top:163px;width:36px;height:14px;border-radius:4px;background:#7c7c7c;box-shadow:0 0.5px 1px rgba(0,0,0,0.45)"></div><div class="a" style="left:562px;top:163px;width:1px;height:14px;background:#686868"></div><div class="a" style="left:585px;top:163px;width:36px;height:14px;border-radius:4px;background:#7c7c7c;box-shadow:0 0.5px 1px rgba(0,0,0,0.45)"></div><div class="a" style="left:603px;top:163px;width:1px;height:14px;background:#686868"></div><div class="t" style="left:544px;width:18px;text-align:center;top:164.5px;font-size:11.5px;color:#f2f2f2;text-shadow:0 0 0.4px #f2f2f2">M</div><div class="t" style="left:562px;width:18px;text-align:center;top:164.5px;font-size:11.5px;color:#f2f2f2;text-shadow:0 0 0.4px #f2f2f2">S</div><div class="t" style="left:585px;width:18px;text-align:center;top:164.5px;font-size:11.5px;color:#f0f0f0;text-shadow:0 0 0.4px #f0f0f0">R</div><div class="t" style="left:603px;width:18px;text-align:center;top:164.5px;font-size:11.5px;color:#f0f0f0;text-shadow:0 0 0.4px #f0f0f0">I</div><div class="a" style="left:628px;top:162px;width:111px;height:16px;border-radius:8px;background:#3e3e3e"></div><div class="a" style="left:700px;top:162.5px;width:14px;height:14px;border-radius:50%;background:#ababab"></div><svg style="left:744px;top:157px" width="24" height="24" viewBox="0 0 24 24"><path d="M6.5 20A10 10 0 1 1 17.5 20" fill="none" stroke="#3c3c3c" stroke-width="3"/><circle cx="12" cy="12" r="7.8" fill="#ababab"/><circle cx="12" cy="6" r="0.9" fill="#333"/><path d="M12 1V3" stroke="#3fbf50" stroke-width="1.2"/></svg><div class="t" style="left:544px;top:341px;font-size:12px;letter-spacing:-0.2px;color:#f2f2f2">Funky Drums +</div><div class="a" style="left:544px;top:359px;width:36px;height:14px;border-radius:4px;background:#7c7c7c;box-shadow:0 0.5px 1px rgba(0,0,0,0.45)"></div><div class="a" style="left:562px;top:359px;width:1px;height:14px;background:#686868"></div><div class="a" style="left:585px;top:359px;width:36px;height:14px;border-radius:4px;background:#7c7c7c;box-shadow:0 0.5px 1px rgba(0,0,0,0.45)"></div><div class="a" style="left:603px;top:359px;width:1px;height:14px;background:#686868"></div><div class="t" style="left:544px;width:18px;text-align:center;top:360.5px;font-size:11.5px;color:#f2f2f2;text-shadow:0 0 0.4px #f2f2f2">M</div><div class="t" style="left:562px;width:18px;text-align:center;top:360.5px;font-size:11.5px;color:#f2f2f2;text-shadow:0 0 0.4px #f2f2f2">S</div><div class="t" style="left:585px;width:18px;text-align:center;top:360.5px;font-size:11.5px;color:#d02a20;text-shadow:0 0 0.4px #d02a20">R</div><div class="t" style="left:603px;width:18px;text-align:center;top:360.5px;font-size:11.5px;color:#e8901a;text-shadow:0 0 0.4px #e8901a">I</div><div class="a" style="left:628px;top:358px;width:111px;height:16px;border-radius:8px;background:#3e3e3e"></div><div class="a" style="left:700px;top:358.5px;width:14px;height:14px;border-radius:50%;background:#ababab"></div><svg style="left:744px;top:353px" width="24" height="24" viewBox="0 0 24 24"><path d="M6.5 20A10 10 0 1 1 17.5 20" fill="none" stroke="#3c3c3c" stroke-width="3"/><circle cx="12" cy="12" r="7.8" fill="#ababab"/><circle cx="12" cy="6" r="0.9" fill="#333"/><path d="M12 1V3" stroke="#3fbf50" stroke-width="1.2"/></svg><svg style="left:560px;top:179px" width="160" height="140" viewBox="0 0 930 814"><g fill="#66e619">
<path d="M85 325H245V360Q245 378 262 378H335V555H85V535H95V345H85Z"/>
<path d="M585 375H790V395H778V485H790V505H585Z"/>
<circle cx="462" cy="570" r="218" fill="#6f6f6f"/>
<circle cx="462" cy="570" r="182" fill="none" stroke="#66e619" stroke-width="28"/>
<ellipse cx="280" cy="140" rx="195" ry="24"/>
<path d="M250 125L262 100H298L310 125Z"/>
<rect x="268" y="62" width="24" height="50" rx="12"/>
<rect x="195" y="140" width="30" height="550"/>
<path d="M85 245L200 175" stroke="#66e619" stroke-width="24" stroke-linecap="round"/>
<path d="M210 690L110 758 M210 690L298 758" stroke="#66e619" stroke-width="24" stroke-linecap="round"/>
<path d="M268 220H452V238H437V335H452V352H268V335H283V238H268Z"/>
<path d="M477 220H661V238H646V335H661V352H477V335H492V238H477Z"/>
<rect x="688" y="195" width="24" height="495" rx="12"/>
<path d="M700 690L605 758 M700 690L793 758" stroke="#66e619" stroke-width="24" stroke-linecap="round"/>
<path d="M675 270Q675 245 700 248Q790 255 828 268Q790 285 700 292Q675 295 675 270Z"/>
</g></svg><svg style="left:510px;top:347px" width="24" height="24" viewBox="0 0 24 24"><g fill="#14d43a">
<rect x="0.5" y="0.5" width="4.3" height="10.5"/><rect x="5.8" y="0.5" width="10" height="4.7"/><rect x="5.8" y="6.3" width="10" height="4.7"/>
<rect x="16.8" y="0.5" width="2.2" height="10.5"/><rect x="20" y="0.5" width="3.3" height="5"/><rect x="20" y="6.5" width="3.3" height="1.7"/><rect x="20" y="9.3" width="3.3" height="1.7"/></g>
<rect x="0.8" y="14" width="22.4" height="9" fill="none" stroke="#14d43a" stroke-width="0.9"/>
<g stroke="#14d43a" stroke-width="0.8"><path d="M4 14V23 M7.2 14V23 M10.4 14V23 M13.6 14V23 M16.8 14V23 M20 14V23"/></g>
<g fill="#14d43a"><rect x="3" y="14" width="2" height="5"/><rect x="6.2" y="14" width="2" height="5"/><rect x="12.6" y="14" width="2" height="5"/><rect x="15.8" y="14" width="2" height="5"/><rect x="19" y="14" width="2" height="5"/></g>
</svg><div class="a" style="left:481px;top:800px;width:296px;height:13px;background:#383838"></div><div class="a" style="left:777px;top:108px;width:526px;height:34px;background:#2a2a2a"></div><div class="a" style="left:784px;top:109px;width:506px;height:15px;background:#474747"></div><div class="a" style="left:784px;top:109px;width:168px;height:15px;background:#5a5a5a"></div><div class="a" style="left:784px;top:126px;width:506px;height:14px;background:#474747"></div><svg style="left:777px;top:109px" width="8" height="15" viewBox="0 0 8 15"><path d="M1 1L7 7.5 1 14Z" fill="#555"/></svg><svg style="left:777px;top:109px" width="526" height="15" viewBox="0 0 526 15"><rect x="7" y="0" width="1" height="15" fill="#777"/><rect x="91" y="0" width="1" height="15" fill="#777"/><rect x="175" y="0" width="1" height="15" fill="#777"/><rect x="259" y="0" width="1" height="15" fill="#777"/><rect x="343" y="0" width="1" height="15" fill="#777"/><rect x="427" y="0" width="1" height="15" fill="#777"/><rect x="511" y="0" width="1" height="15" fill="#777"/></svg><div class="t" style="left:787px;top:110px;font-size:12px;color:#e8e8e8">1</div><div class="t" style="left:871px;top:110px;font-size:12px;color:#e8e8e8">3</div><div class="t" style="left:955px;top:110px;font-size:12px;color:#e8e8e8">5</div><div class="t" style="left:1039px;top:110px;font-size:12px;color:#e8e8e8">7</div><div class="t" style="left:1123px;top:110px;font-size:12px;color:#e8e8e8">9</div><div class="t" style="left:1207px;top:110px;font-size:12px;color:#e8e8e8">11</div><svg style="left:777px;top:126px" width="526" height="14" viewBox="0 0 526 14"><rect x="7.0" y="0" width="1" height="14" fill="#5e5e5e"/><rect x="17.5" y="8" width="1" height="6" fill="#5a5a5a"/><rect x="28.0" y="8" width="1" height="6" fill="#5a5a5a"/><rect x="38.5" y="8" width="1" height="6" fill="#5a5a5a"/><rect x="49.0" y="0" width="1" height="14" fill="#5e5e5e"/><rect x="59.5" y="8" width="1" height="6" fill="#5a5a5a"/><rect x="70.0" y="8" width="1" height="6" fill="#5a5a5a"/><rect x="80.5" y="8" width="1" height="6" fill="#5a5a5a"/><rect x="91.0" y="0" width="1" height="14" fill="#5e5e5e"/><rect x="101.5" y="8" width="1" height="6" fill="#5a5a5a"/><rect x="112.0" y="8" width="1" height="6" fill="#5a5a5a"/><rect x="122.5" y="8" width="1" height="6" fill="#5a5a5a"/><rect x="133.0" y="0" width="1" height="14" fill="#5e5e5e"/><rect x="143.5" y="8" width="1" height="6" fill="#5a5a5a"/><rect x="154.0" y="8" width="1" height="6" fill="#5a5a5a"/><rect x="164.5" y="8" width="1" height="6" fill="#5a5a5a"/><rect x="175.0" y="0" width="1" height="14" fill="#5e5e5e"/><rect x="185.5" y="8" width="1" height="6" fill="#5a5a5a"/><rect x="196.0" y="8" width="1" height="6" fill="#5a5a5a"/><rect x="206.5" y="8" width="1" height="6" fill="#5a5a5a"/><rect x="217.0" y="0" width="1" height="14" fill="#5e5e5e"/><rect x="227.5" y="8" width="1" height="6" fill="#5a5a5a"/><rect x="238.0" y="8" width="1" height="6" fill="#5a5a5a"/><rect x="248.5" y="8" width="1" height="6" fill="#5a5a5a"/><rect x="259.0" y="0" width="1" height="14" fill="#5e5e5e"/><rect x="269.5" y="8" width="1" height="6" fill="#5a5a5a"/><rect x="280.0" y="8" width="1" height="6" fill="#5a5a5a"/><rect x="290.5" y="8" width="1" height="6" fill="#5a5a5a"/><rect x="301.0" y="0" width="1" height="14" fill="#5e5e5e"/><rect x="311.5" y="8" width="1" height="6" fill="#5a5a5a"/><rect x="322.0" y="8" width="1" height="6" fill="#5a5a5a"/><rect x="332.5" y="8" width="1" height="6" fill="#5a5a5a"/><rect x="343.0" y="0" width="1" height="14" fill="#5e5e5e"/><rect x="353.5" y="8" width="1" height="6" fill="#5a5a5a"/><rect x="364.0" y="8" width="1" height="6" fill="#5a5a5a"/><rect x="374.5" y="8" width="1" height="6" fill="#5a5a5a"/><rect x="385.0" y="0" width="1" height="14" fill="#5e5e5e"/><rect x="395.5" y="8" width="1" height="6" fill="#5a5a5a"/><rect x="406.0" y="8" width="1" height="6" fill="#5a5a5a"/><rect x="416.5" y="8" width="1" height="6" fill="#5a5a5a"/><rect x="427.0" y="0" width="1" height="14" fill="#5e5e5e"/><rect x="437.5" y="8" width="1" height="6" fill="#5a5a5a"/><rect x="448.0" y="8" width="1" height="6" fill="#5a5a5a"/><rect x="458.5" y="8" width="1" height="6" fill="#5a5a5a"/><rect x="469.0" y="0" width="1" height="14" fill="#5e5e5e"/><rect x="479.5" y="8" width="1" height="6" fill="#5a5a5a"/><rect x="490.0" y="8" width="1" height="6" fill="#5a5a5a"/><rect x="500.5" y="8" width="1" height="6" fill="#5a5a5a"/></svg><div class="t" style="left:789px;top:128px;font-size:11px;color:#e0e0e0">Cno 3</div><div class="a" style="left:784px;top:124px;width:506px;height:2px;background:#1c1c1c"></div><div class="a" style="left:784px;top:140px;width:506px;height:2px;background:#111"></div><div class="a" style="left:786px;top:142px;width:505px;height:192px;border-radius:3px;background:#52a21f"></div><div class="t" style="left:789.5px;top:145px;font-size:10px;color:#f0faea;text-shadow:0 0 0.4px #f0faea">FunkSmash Kit_bip_1</div><svg style="left:893px;top:146px" width="13" height="8" viewBox="0 0 13 8"><circle cx="4.2" cy="4" r="3.2" fill="none" stroke="#e0f0d8" stroke-width="1"/><circle cx="8.8" cy="4" r="3.2" fill="none" stroke="#e0f0d8" stroke-width="1"/></svg><svg style="left:0;top:-1px" width="1303" height="814" viewBox="0 0 1303 814"><path d="M786 200V203M787 178V225M788 192V211M789 191V212M790 197V206M791 186V217M792 194V209M793 199V204M794 199V204M795 200V203M796 200V203M797 188V215M798 195V208M799 200V203M800 200V203M801 188V215M802 200V203M803 196V207M804 200V203M805 200V203M806 200V203M807 200V203M808 181V222M809 196V207M810 197V206M811 188V215M812 199V204M813 194V209M814 192V211M815 200V203M816 196V207M817 200V203M818 189V214M819 199V204M820 196V207M821 200V203M822 200V203M823 200V203M824 200V203M825 200V203M826 200V203M827 196V207M828 200V203M829 179V224M830 190V213M831 198V205M832 191V212M833 197V206M834 198V205M835 195V208M836 200V203M837 199V204M838 200V203M839 189V214M840 192V211M841 199V204M842 200V203M843 200V203M844 200V203M845 200V203M846 187V216M847 196V207M848 200V203M849 200V203M850 188V215M851 176V227M852 186V217M853 193V210M854 187V216M855 196V207M856 190V213M857 197V206M858 198V205M859 197V206M860 193V210M861 182V221M862 198V205M863 199V204M864 195V208M865 199V204M866 199V204M867 200V203M868 200V203M869 196V207M870 200V203M871 186V217M872 174V229M873 195V208M874 193V210M875 194V209M876 194V209M877 194V209M878 198V205M879 197V206M880 197V206M881 188V215M882 196V207M883 197V206M884 197V206M885 200V203M886 192V211M887 199V204M888 194V209M889 200V203M890 199V204M891 197V206M892 179V224M893 198V205M894 196V207M895 198V205M896 194V209M897 200V203M898 189V214M899 200V203M900 200V203M901 200V203M902 190V213M903 182V221M904 199V204M905 197V206M906 200V203M907 200V203M908 192V211M909 198V205M910 198V205M911 197V206M912 178V225M913 189V214M914 194V209M915 192V211M916 192V211M917 195V208M918 199V204M919 199V204M920 200V203M921 199V204M922 198V205M923 200V203M924 185V218M925 200V203M926 200V203M927 200V203M928 200V203M929 200V203M930 200V203M931 197V206M932 200V203M933 199V204M934 178V225M935 197V206M936 198V205M937 197V206M938 199V204M939 198V205M940 195V208M941 199V204M942 199V204M943 199V204M944 187V216M945 195V208M946 200V203M947 197V206M948 200V203M949 200V203M950 200V203M951 200V203M952 198V205M953 200V203M954 176V227M955 189V214M956 187V216M957 197V206M958 196V207M959 196V207M960 198V205M961 199V204M962 195V208M963 196V207M964 199V204M965 196V207M966 181V222M967 191V212M968 195V208M969 189V214M970 190V213M971 187V216M972 195V208M973 198V205M974 196V207M975 199V204M976 176V227M977 185V218M978 197V206M979 197V206M980 199V204M981 190V213M982 199V204M983 199V204M984 200V203M985 199V204M986 200V203M987 189V214M988 200V203M989 199V204M990 200V203M991 200V203M992 200V203M993 200V203M994 197V206M995 200V203M996 193V210M997 178V225M998 195V208M999 190V213M1000 190V213M1001 196V207M1002 198V205M1003 199V204M1004 199V204M1005 193V210M1006 198V205M1007 199V204M1008 191V212M1009 195V208M1010 200V203M1011 200V203M1012 196V207M1013 200V203M1014 200V203M1015 200V203M1016 200V203M1017 198V205M1018 196V207M1019 176V227M1020 183V220M1021 197V206M1022 195V208M1023 199V204M1024 193V210M1025 200V203M1026 195V208M1027 200V203M1028 181V222M1029 189V214M1030 200V203M1031 200V203M1032 200V203M1033 200V203M1034 200V203M1035 200V203M1036 200V203M1037 200V203M1038 198V205M1039 179V224M1040 195V208M1041 196V207M1042 197V206M1043 198V205M1044 196V207M1045 187V216M1046 197V206M1047 199V204M1048 199V204M1049 200V203M1050 187V216M1051 194V209M1052 200V203M1053 200V203M1054 200V203M1055 200V203M1056 197V206M1057 200V203M1058 200V203M1059 194V209M1060 179V224M1061 191V212M1062 197V206M1063 199V204M1064 193V210M1065 198V205M1066 195V208M1067 199V204M1068 200V203M1069 200V203M1070 200V203M1071 191V212M1072 194V209M1073 194V209M1074 186V217M1075 196V207M1076 200V203M1077 200V203M1078 195V208M1079 200V203M1080 200V203M1081 179V224M1082 184V219M1083 197V206M1084 197V206M1085 191V212M1086 197V206M1087 188V215M1088 198V205M1089 198V205M1090 200V203M1091 186V217M1092 199V204M1093 197V206M1094 200V203M1095 200V203M1096 200V203M1097 200V203M1098 200V203M1099 185V218M1100 200V203M1101 200V203M1102 177V226M1103 193V210M1104 189V214M1105 194V209M1106 186V217M1107 194V209M1108 199V204M1109 200V203M1110 198V205M1111 200V203M1112 196V207M1113 180V223M1114 195V208M1115 196V207M1116 187V216M1117 194V209M1118 196V207M1119 198V205M1120 189V214M1121 199V204M1122 199V204M1123 176V227M1124 184V219M1125 195V208M1126 196V207M1127 198V205M1128 198V205M1129 196V207M1130 197V206M1131 198V205M1132 199V204M1133 193V210M1134 184V219M1135 197V206M1136 200V203M1137 200V203M1138 199V204M1139 200V203M1140 200V203M1141 200V203M1142 200V203M1143 200V203M1144 178V225M1145 196V207M1146 199V204M1147 198V205M1148 199V204M1149 200V203M1150 199V204M1151 200V203M1152 200V203M1153 200V203M1154 200V203M1155 190V213M1156 196V207M1157 199V204M1158 200V203M1159 200V203M1160 198V205M1161 198V205M1162 197V206M1163 200V203M1164 178V225M1165 188V215M1166 198V205M1167 192V211M1168 197V206M1169 192V211M1170 198V205M1171 199V204M1172 199V204M1173 196V207M1174 200V203M1175 195V208M1176 181V222M1177 185V218M1178 200V203M1179 200V203M1180 186V217M1181 198V205M1182 200V203M1183 200V203M1184 200V203M1185 179V224M1186 186V217M1187 198V205M1188 198V205M1189 193V210M1190 199V204M1191 200V203M1192 189V214M1193 200V203M1194 198V205M1195 200V203M1196 200V203M1197 188V215M1198 191V212M1199 195V208M1200 192V211M1201 200V203M1202 200V203M1203 200V203M1204 200V203M1205 200V203M1206 200V203M1207 174V229M1208 196V207M1209 197V206M1210 190V213M1211 198V205M1212 199V204M1213 199V204M1214 199V204M1215 199V204M1216 195V208M1217 199V204M1218 188V215M1219 195V208M1220 199V204M1221 196V207M1222 200V203M1223 196V207M1224 198V205M1225 200V203M1226 200V203M1227 175V228M1228 185V218M1229 197V206M1230 190V213M1231 197V206M1232 197V206M1233 191V212M1234 187V216M1235 196V207M1236 199V204M1237 194V209M1238 194V209M1239 181V222M1240 193V210M1241 199V204M1242 192V211M1243 200V203M1244 200V203M1245 199V204M1246 200V203M1247 197V206M1248 196V207M1249 200V203M1250 176V227M1251 186V217M1252 196V207M1253 185V218M1254 197V206M1255 199V204M1256 198V205M1257 188V215M1258 194V209M1259 193V210M1260 194V209M1261 197V206M1262 200V203M1263 200V203M1264 200V203M1265 200V203M1266 200V203M1267 200V203M1268 200V203M1269 197V206M1270 177V226M1271 189V214M1272 188V215M1273 197V206M1274 186V217M1275 199V204M1276 199V204M1277 200V203M1278 196V207M1279 200V203M1280 200V203M1281 185V218M1282 197V206M1283 195V208M1284 197V206M1285 193V210M1286 196V207M1287 198V205M1288 198V205M1289 199V204M786 289V291M787 251V329M788 271V309M789 274V306M790 286V294M791 278V302M792 287V293M793 286V294M794 271V309M795 288V292M796 283V297M797 287V293M798 273V307M799 288V292M800 288V292M801 268V312M802 289V291M803 287V293M804 289V291M805 289V291M806 289V291M807 286V294M808 255V325M809 280V300M810 287V293M811 281V299M812 288V292M813 287V293M814 287V293M815 289V291M816 289V291M817 286V294M818 276V304M819 281V299M820 283V297M821 282V298M822 269V311M823 289V291M824 289V291M825 286V294M826 285V295M827 286V294M828 289V291M829 250V330M830 285V295M831 284V296M832 285V295M833 287V293M834 286V294M835 287V293M836 288V292M837 288V292M838 287V293M839 288V292M840 271V309M841 283V297M842 282V298M843 284V296M844 283V297M845 286V294M846 285V295M847 286V294M848 287V293M849 287V293M850 286V294M851 250V330M852 258V322M853 287V293M854 288V292M855 288V292M856 289V291M857 289V291M858 286V294M859 289V291M860 265V315M861 283V297M862 277V303M863 284V296M864 268V312M865 283V297M866 284V296M867 281V299M868 284V296M869 279V301M870 252V328M871 276V304M872 285V295M873 278V302M874 285V295M875 286V294M876 287V293M877 286V294M878 286V294M879 287V293M880 287V293M881 283V297M882 269V311M883 274V306M884 288V292M885 289V291M886 289V291M887 289V291M888 289V291M889 289V291M890 289V291M891 289V291M892 248V332M893 285V295M894 287V293M895 287V293M896 288V292M897 288V292M898 289V291M899 289V291M900 289V291M901 289V291M902 274V306M903 288V292M904 286V294M905 289V291M906 289V291M907 277V303M908 267V313M909 289V291M910 289V291M911 289V291M912 254V326M913 286V294M914 286V294M915 286V294M916 286V294M917 287V293M918 287V293M919 271V309M920 289V291M921 289V291M922 288V292M923 289V291M924 260V320M925 274V306M926 284V296M927 285V295M928 275V305M929 289V291M930 289V291M931 289V291M932 289V291M933 289V291M934 253V327M935 275V305M936 287V293M937 287V293M938 287V293M939 288V292M940 288V292M941 265V315M942 288V292M943 289V291M944 263V317M945 278V302M946 289V291M947 285V295M948 288V292M949 289V291M950 289V291M951 289V291M952 289V291M953 289V291M954 254V326M955 262V318M956 286V294M957 276V304M958 287V293M959 279V301M960 287V293M961 286V294M962 286V294M963 288V292M964 287V293M965 272V308M966 287V293M967 289V291M968 288V292M969 266V314M970 289V291M971 288V292M972 285V295M973 289V291M974 285V295M975 289V291M976 284V296M977 252V328M978 275V305M979 285V295M980 286V294M981 284V296M982 288V292M983 288V292M984 288V292M985 289V291M986 289V291M987 258V322M988 284V296M989 289V291M990 276V304M991 287V293M992 289V291M993 289V291M994 289V291M995 289V291M996 289V291M997 249V331M998 284V296M999 284V296M1000 285V295M1001 278V302M1002 285V295M1003 287V293M1004 286V294M1005 287V293M1006 286V294M1007 264V316M1008 288V292M1009 283V297M1010 284V296M1011 288V292M1012 284V296M1013 289V291M1014 289V291M1015 289V291M1016 289V291M1017 289V291M1018 252V328M1019 265V315M1020 286V294M1021 286V294M1022 281V299M1023 287V293M1024 288V292M1025 289V291M1026 289V291M1027 289V291M1028 284V296M1029 263V317M1030 270V310M1031 288V292M1032 289V291M1033 288V292M1034 289V291M1035 289V291M1036 277V303M1037 289V291M1038 286V294M1039 251V329M1040 286V294M1041 286V294M1042 286V294M1043 286V294M1044 285V295M1045 287V293M1046 288V292M1047 286V294M1048 288V292M1049 277V303M1050 280V300M1051 288V292M1052 288V292M1053 289V291M1054 289V291M1055 286V294M1056 289V291M1057 289V291M1058 289V291M1059 286V294M1060 249V331M1061 260V320M1062 287V293M1063 288V292M1064 287V293M1065 288V292M1066 274V306M1067 288V292M1068 289V291M1069 289V291M1070 284V296M1071 270V310M1072 275V305M1073 289V291M1074 288V292M1075 289V291M1076 286V294M1077 289V291M1078 289V291M1079 289V291M1080 289V291M1081 247V333M1082 269V311M1083 280V300M1084 280V300M1085 270V310M1086 287V293M1087 283V297M1088 288V292M1089 289V291M1090 289V291M1091 288V292M1092 266V314M1093 280V300M1094 288V292M1095 289V291M1096 289V291M1097 289V291M1098 289V291M1099 277V303M1100 289V291M1101 289V291M1102 253V327M1103 263V317M1104 275V305M1105 285V295M1106 267V313M1107 285V295M1108 286V294M1109 278V302M1110 287V293M1111 287V293M1112 273V307M1113 275V305M1114 283V297M1115 287V293M1116 288V292M1117 284V296M1118 288V292M1119 274V306M1120 288V292M1121 285V295M1122 289V291M1123 249V331M1124 286V294M1125 278V302M1126 284V296M1127 286V294M1128 286V294M1129 282V298M1130 282V298M1131 284V296M1132 288V292M1133 288V292M1134 267V313M1135 288V292M1136 286V294M1137 284V296M1138 289V291M1139 289V291M1140 265V315M1141 285V295M1142 275V305M1143 289V291M1144 258V322M1145 270V310M1146 283V297M1147 286V294M1148 283V297M1149 287V293M1150 288V292M1151 289V291M1152 288V292M1153 289V291M1154 287V293M1155 259V321M1156 288V292M1157 288V292M1158 289V291M1159 289V291M1160 289V291M1161 286V294M1162 289V291M1163 284V296M1164 268V312M1165 249V331M1166 286V294M1167 285V295M1168 287V293M1169 286V294M1170 287V293M1171 288V292M1172 287V293M1173 288V292M1174 288V292M1175 288V292M1176 271V309M1177 279V301M1178 286V294M1179 288V292M1180 288V292M1181 288V292M1182 289V291M1183 289V291M1184 289V291M1185 289V291M1186 254V326M1187 264V316M1188 281V299M1189 283V297M1190 264V316M1191 287V293M1192 281V299M1193 282V298M1194 286V294M1195 287V293M1196 287V293M1197 267V313M1198 288V292M1199 288V292M1200 288V292M1201 288V292M1202 289V291M1203 288V292M1204 289V291M1205 289V291M1206 289V291M1207 252V328M1208 267V313M1209 279V301M1210 284V296M1211 286V294M1212 286V294M1213 286V294M1214 287V293M1215 286V294M1216 286V294M1217 264V316M1218 278V302M1219 287V293M1220 289V291M1221 288V292M1222 289V291M1223 288V292M1224 289V291M1225 289V291M1226 289V291M1227 289V291M1228 254V326M1229 262V318M1230 275V305M1231 283V297M1232 284V296M1233 284V296M1234 286V294M1235 286V294M1236 286V294M1237 278V302M1238 287V293M1239 275V305M1240 278V302M1241 287V293M1242 282V298M1243 284V296M1244 289V291M1245 284V296M1246 288V292M1247 288V292M1248 288V292M1249 253V327M1250 285V295M1251 285V295M1252 280V300M1253 281V299M1254 274V306M1255 288V292M1256 286V294M1257 288V292M1258 288V292M1259 289V291M1260 275V305M1261 289V291M1262 289V291M1263 289V291M1264 289V291M1265 289V291M1266 289V291M1267 289V291M1268 289V291M1269 258V322M1270 271V309M1271 288V292M1272 287V293M1273 288V292M1274 288V292M1275 289V291M1276 277V303M1277 289V291M1278 289V291M1279 289V291M1280 289V291M1281 261V319M1282 287V293M1283 286V294M1284 286V294M1285 286V294M1286 284V296M1287 266V314M1288 289V291M1289 289V291" stroke="#c6eeb0" stroke-width="1" fill="none" transform="translate(0.5,0)"/></svg><div class="a" style="left:786px;top:334px;width:505px;height:3px;background:#151515"></div><div class="a" style="left:786px;top:337px;width:505px;height:40px;border-radius:3px;background:#1fa032"></div><div class="t" style="left:790px;top:340px;font-size:10px;color:#e0f5e0"><span class="c">乐器</span> 1</div><svg style="left:0;top:371.9px" width="1303" height="2" viewBox="0 0 1303 2"><path d="M786.0 0H787.2M791.8 0H795.2M799.7 0H803.1M807.6 0H811.0M812.5 0H815.9M825.8 0H829.2M833.8 0H837.2M841.7 0H845.1M849.6 0H853.0M854.5 0H857.9M867.8 0H871.2M875.8 0H879.2M883.7 0H887.1M891.6 0H895.0M896.5 0H899.9M909.8 0H913.2M917.8 0H921.2M925.7 0H929.1M933.6 0H937.0M938.5 0H941.9M951.8 0H955.2M959.8 0H963.2M967.7 0H971.1M975.6 0H979.0M980.5 0H983.9M993.8 0H997.2M1001.8 0H1005.2M1009.7 0H1013.1M1017.6 0H1021.0M1022.5 0H1025.9M1035.8 0H1039.2M1043.8 0H1047.2M1051.7 0H1055.1M1059.6 0H1063.0M1064.5 0H1067.9M1077.8 0H1081.2M1085.8 0H1089.2M1093.7 0H1097.1M1101.6 0H1105.0M1106.5 0H1109.9M1119.8 0H1123.2M1127.8 0H1131.2M1135.7 0H1139.1M1143.6 0H1147.0M1148.5 0H1151.9M1161.8 0H1165.2M1169.8 0H1173.2M1177.7 0H1181.1M1185.6 0H1189.0M1190.5 0H1193.9M1203.8 0H1207.2M1211.8 0H1215.2M1219.7 0H1223.1M1227.6 0H1231.0M1232.5 0H1235.9M1245.8 0H1249.2M1253.8 0H1257.2M1261.7 0H1265.1M1269.6 0H1273.0M1274.5 0H1277.9" stroke="#d0ecd0" stroke-width="1.3" transform="translate(0,0.6)"/></svg><div class="a" style="left:777px;top:142px;width:8px;height:658px;background:#333"></div><div class="a" style="left:784px;top:126px;width:1px;height:674px;background:#e6e6e6"></div><svg style="left:778px;top:125px" width="15" height="15" viewBox="0 0 15 15"><path d="M1 3Q1 1 3 1H12Q14 1 14 3V8L7.5 14 1 8Z" fill="#bcbcbc"/></svg><div class="a" style="left:784px;top:126px;width:1px;height:14px;background:#f0f0f0"></div><div class="a" style="left:1291px;top:108px;width:12px;height:705px;background:#3a3a3a"></div><div class="a" style="left:1290px;top:142px;width:1px;height:658px;background:#2a2a2a"></div><div class="a" style="left:777px;top:800px;width:526px;height:13px;background:#393939"></div><div class="a" style="left:779px;top:803px;width:47px;height:7px;border-radius:3.5px;background:#727272"></div><div class="a" style="left:1291px;top:800px;width:12px;height:13px;background:#303030"></div></div><div class="a" style="left:668px;top:403px;width:493px;height:352px;border-radius:9px;background:#f5f5f5;box-shadow:0 0 0 0.5px rgba(0,0,0,0.45),0 3px 10px rgba(0,0,0,0.22);overflow:hidden"><div class="a" style="left:0;top:0;width:493px;height:17px;background:#fbfbfb;border-bottom:1px solid #dedede"></div><div class="t" style="left:0;width:493px;text-align:center;top:3px;font-size:10px;color:#3a3a3a;font-weight:bold"><span class="c">鼓替换</span>/<span class="c">重叠</span></div></div><div class="t" style="left:668px;width:104px;text-align:right;top:439.5px;font-size:12px;color:#262626"><span class="c">乐器</span><span style="margin-left:1.5px">:</span></div><div class="t" style="left:668px;width:104px;text-align:right;top:470.0px;font-size:12px;color:#262626"><span class="c">模式</span><span style="margin-left:1.5px">:</span></div><div class="t" style="left:668px;width:104px;text-align:right;top:514.5px;font-size:12px;color:#262626"><span class="c">相对临界值</span><span style="margin-left:1.5px">:</span></div><div class="t" style="left:668px;width:104px;text-align:right;top:602.0px;font-size:12px;color:#262626"><span class="c">触发器音符</span><span style="margin-left:1.5px">:</span></div><div class="t" style="left:668px;width:104px;text-align:right;top:633.5px;font-size:12px;color:#262626"><span class="c">时序偏移</span><span style="margin-left:1.5px">:</span></div><div class="a" style="left:780px;top:438px;width:239px;height:17px;border-radius:5px;background:#ffffff;box-shadow:0 0 0 0.5px rgba(0,0,0,0.18),0 0.5px 1.5px rgba(0,0,0,0.22)"></div><div class="t" style="left:788px;top:440px;font-size:12px;color:#262626"><span class="c">脚鼓</span></div><div class="a" style="left:1003px;top:439.5px;width:14px;height:14px;border-radius:4px;background:linear-gradient(#3d95ff,#1a74f0)"></div><svg style="left:1003px;top:439.5px" width="14" height="14" viewBox="0 0 14 14"><path d="M4.5 5.5L7 3 9.5 5.5 M4.5 8.5L7 11 9.5 8.5" fill="none" stroke="#fff" stroke-width="1.3"/></svg><div class="a" style="left:780.5px;top:470px;width:13px;height:13px;border-radius:50%;background:#1f7cf5"></div><div class="a" style="left:784.5px;top:474px;width:5px;height:5px;border-radius:50%;background:#fff"></div><div class="t" style="left:798px;top:470px;font-size:12px;color:#262626"><span class="c">替换</span></div><div class="a" style="left:780.5px;top:488px;width:13px;height:13px;border-radius:50%;background:#fff;box-shadow:0 0 0 0.5px rgba(0,0,0,0.25),0 0.5px 1px rgba(0,0,0,0.15)"></div><div class="t" style="left:798px;top:488px;font-size:12px;color:#262626"><span class="c">重叠</span></div><div class="a" style="left:781px;top:519.5px;width:233px;height:3px;border-radius:1.5px;background:#dcdcdc"></div><svg style="left:780px;top:517.5px" width="240" height="8" viewBox="0 0 240 8"><g fill="#b8b8b8"><rect x="1.0" y="0" width="1" height="7"/><rect x="29.7" y="0" width="1" height="7"/><rect x="58.4" y="0" width="1" height="7"/><rect x="87.1" y="0" width="1" height="7"/><rect x="115.8" y="0" width="1" height="7"/><rect x="144.5" y="0" width="1" height="7"/><rect x="173.2" y="0" width="1" height="7"/><rect x="201.9" y="0" width="1" height="7"/><rect x="230.6" y="0" width="1" height="7"/></g></svg><div class="a" style="left:939.0px;top:511px;width:7px;height:20px;border-radius:3.5px;background:#fff;box-shadow:0 0 0 0.5px rgba(0,0,0,0.25),0 1px 1.5px rgba(0,0,0,0.25)"></div><div class="a" style="left:781px;top:638.5px;width:233px;height:3px;border-radius:1.5px;background:#dcdcdc"></div><svg style="left:780px;top:636.5px" width="240" height="8" viewBox="0 0 240 8"><g fill="#b8b8b8"><rect x="1.0" y="0" width="1" height="7"/><rect x="29.7" y="0" width="1" height="7"/><rect x="58.4" y="0" width="1" height="7"/><rect x="87.1" y="0" width="1" height="7"/><rect x="115.8" y="0" width="1" height="7"/><rect x="144.5" y="0" width="1" height="7"/><rect x="173.2" y="0" width="1" height="7"/><rect x="201.9" y="0" width="1" height="7"/><rect x="230.6" y="0" width="1" height="7"/></g></svg><div class="a" style="left:949.5px;top:630px;width:7px;height:20px;border-radius:3.5px;background:#fff;box-shadow:0 0 0 0.5px rgba(0,0,0,0.25),0 1px 1.5px rgba(0,0,0,0.25)"></div><div class="a" style="left:1019.5px;top:510px;width:93.5px;height:22px;border-radius:7px;background:#fff;border:3px solid #7ba8f2"></div><div class="a" style="left:1050.5px;top:513.4px;width:31.5px;height:15.3px;background:#b5d5fc"></div><div class="t" style="left:1050px;width:32px;text-align:center;top:514.5px;font-size:12px;color:#262626">-12.0</div><svg style="left:1025px;top:518px" width="10" height="6" viewBox="0 0 10 6"><path d="M1 1l4 4 4-4" fill="none" stroke="#7a7a7a" stroke-width="1.1"/></svg><svg style="left:1097px;top:518px" width="10" height="6" viewBox="0 0 10 6"><path d="M1 5l4-4 4 4" fill="none" stroke="#7a7a7a" stroke-width="1.1"/></svg><div class="t" style="left:1115px;top:514.5px;font-size:12px;color:#262626">dB</div><div class="t" style="left:780px;top:543.5px;font-size:12px;color:#262626"><span class="c">将为瞬变生成触发器音符，其值要高于指定值。</span></div><div class="a" style="left:780px;top:566px;width:40px;height:17px;border-radius:5px;background:#ffffff;box-shadow:0 0 0 0.5px rgba(0,0,0,0.18),0 0.5px 1.5px rgba(0,0,0,0.22)"></div><div class="t" style="left:780px;width:40px;text-align:center;top:568px;font-size:12px;color:#262626"><span class="c">试听</span></div><div class="a" style="left:780px;top:601px;width:150px;height:17px;border-radius:5px;background:#ffffff;box-shadow:0 0 0 0.5px rgba(0,0,0,0.18),0 0.5px 1.5px rgba(0,0,0,0.22)"></div><div class="t" style="left:788px;top:602.5px;font-size:12px;color:#262626"><span class="c">自动</span></div><div class="a" style="left:914.5px;top:602px;width:14px;height:14px;border-radius:4px;background:linear-gradient(#3d95ff,#1a74f0)"></div><svg style="left:914.5px;top:602px" width="14" height="14" viewBox="0 0 14 14"><path d="M4.5 5.5L7 3 9.5 5.5 M4.5 8.5L7 11 9.5 8.5" fill="none" stroke="#fff" stroke-width="1.3"/></svg><div class="a" style="left:1020px;top:632px;width:90px;height:18px;border-radius:5px;background:#fff;box-shadow:0 0 0 0.5px rgba(0,0,0,0.18),0 0.5px 1.5px rgba(0,0,0,0.2)"></div><svg style="left:1024px;top:638px" width="10" height="6" viewBox="0 0 10 6"><path d="M1 1l4 4 4-4" fill="none" stroke="#7a7a7a" stroke-width="1.1"/></svg><svg style="left:1095px;top:638px" width="10" height="6" viewBox="0 0 10 6"><path d="M1 5l4-4 4 4" fill="none" stroke="#7a7a7a" stroke-width="1.1"/></svg><div class="t" style="left:1045px;width:40px;text-align:center;top:634px;font-size:12px;color:#262626">0.0</div><div class="t" style="left:1115px;top:634px;font-size:12px;color:#262626"><span class="c">毫秒</span></div><div class="a" style="left:780px;top:669px;width:108px;height:18px;border-radius:5px;background:#ffffff;box-shadow:0 0 0 0.5px rgba(0,0,0,0.18),0 0.5px 1.5px rgba(0,0,0,0.22)"></div><div class="t" style="left:780px;width:108px;text-align:center;top:671.5px;font-size:12px;color:#262626"><span class="c">设定平均起音时间</span></div><div class="a" style="left:1024px;top:721px;width:55px;height:17px;border-radius:5px;background:#ffffff;box-shadow:0 0 0 0.5px rgba(0,0,0,0.18),0 0.5px 1.5px rgba(0,0,0,0.22)"></div><div class="t" style="left:1024px;width:55px;text-align:center;top:723px;font-size:12px;color:#262626"><span class="c">取消</span></div><div class="a" style="left:1089px;top:721px;width:54px;height:17px;border-radius:5px;background:linear-gradient(#2d8cff,#0a6cff);box-shadow:0 0.5px 1px rgba(0,0,0,0.25)"></div><div class="t" style="left:1089px;width:54px;text-align:center;top:723px;font-size:12px;color:#fff"><span class="c">好</span></div><script>(function(){try{var s=document.createElement("span");s.style.cssText="position:absolute;left:0;top:0;font-size:100px;line-height:1;font-family:'Liberation Sans',sans-serif;visibility:hidden;white-space:nowrap";s.textContent="\u8bbe\u7f6e\u5747\u8861\u5668";document.body.appendChild(s);var w=s.getBoundingClientRect().width/5;document.body.removeChild(s);if(w>20&&w<90){document.documentElement.style.setProperty("--cls",((100-w)/100).toFixed(3)+"em");}}catch(e){}})();</script></body></html>
